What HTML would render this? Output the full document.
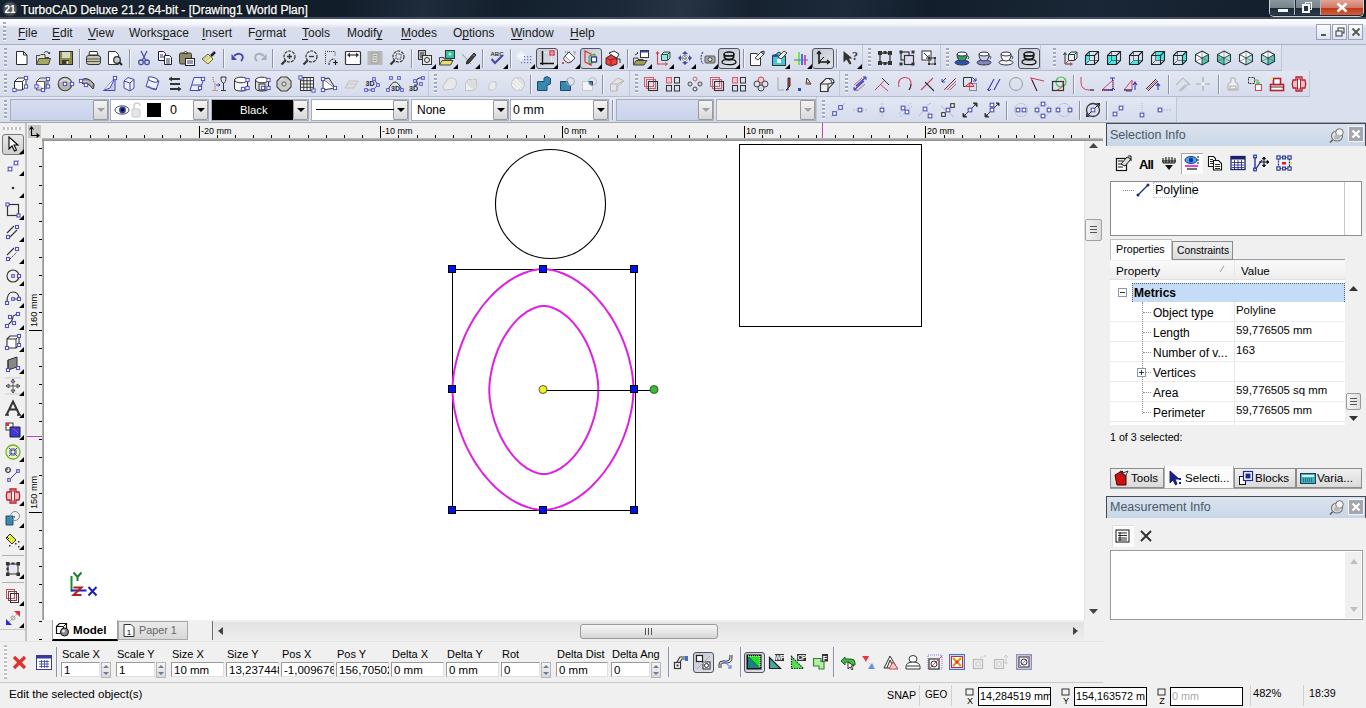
<!DOCTYPE html><html><head><meta charset="utf-8"><style>html,body{margin:0;padding:0;}body{width:1366px;height:708px;overflow:hidden;position:relative;background:#f0f0f0;font-family:"Liberation Sans", sans-serif;}div{box-sizing:border-box;}svg{overflow:visible;}</style></head><body>
<div style="position:absolute;left:0px;top:0px;width:1366px;height:19px;background:linear-gradient(100deg,#16222f 0%,#121d2a 25%,#1e2c3c 31%,#131f2c 37%,#1a2838 45%,#263444 50%,#162230 55%,#1c2a3a 62%,#121e2b 68%,#1a2736 80%,#101b28 100%);"></div>
<div style="position:absolute;left:0px;top:17px;width:1366px;height:2px;background:#3f4d5e;"></div>
<svg style="position:absolute;left:2px;top:1px;" width="16" height="16" viewBox="0 0 16 16"><circle cx="8" cy="8" r="7.5" fill="#3a3e44"/><circle cx="8" cy="8" r="6" fill="#555a60"/><text x="8" y="12" font-size="10" font-weight="bold" fill="#fff" text-anchor="middle" font-family="Liberation Sans">21</text></svg>
<div style="position:absolute;left:21px;top:3px;font-size:12px;line-height:14px;color:#fff;white-space:nowrap;text-shadow:0 0 2px #000;-webkit-text-stroke:0.25px #fff;">TurboCAD Deluxe 21.2 64-bit - [Drawing1 World Plan]</div>
<div style="position:absolute;left:1269px;top:0px;width:95px;height:17px;background:#1c2836;border:1px solid #c8d0d8;border-top:none;border-radius:0 0 5px 5px;"></div>
<div style="position:absolute;left:1270px;top:0px;width:25px;height:15px;background:linear-gradient(#8a979f 0%,#75838b 50%,#1e2a36 56%,#2c3c4a 100%);border-right:1px solid #b0b8c0;"></div>
<div style="position:absolute;left:1278px;top:9px;width:10px;height:3px;background:#f4f4f4;"></div>
<div style="position:absolute;left:1296px;top:0px;width:25px;height:15px;background:linear-gradient(#8a979f 0%,#75838b 50%,#1e2a36 56%,#2c3c4a 100%);border-right:1px solid #b0b8c0;"></div>
<svg style="position:absolute;left:1301px;top:1px;" width="12" height="13" viewBox="0 0 12 13"><rect x="4.5" y="1.5" width="6" height="7" fill="none" stroke="#f4f4f4" stroke-width="1"/><rect x="2" y="4" width="6" height="7" fill="#2a3440" stroke="#f4f4f4" stroke-width="2"/></svg>
<div style="position:absolute;left:1321px;top:0px;width:42px;height:15px;background:linear-gradient(#e4a494 0%,#d07a68 50%,#c03a18 56%,#d06040 100%);border-radius:0 0 4px 0;"></div>
<svg style="position:absolute;left:1336px;top:2px;" width="12" height="11" viewBox="0 0 12 11"><path d="M1.5 1.5L10.5 9.5M10.5 1.5L1.5 9.5" stroke="#fff" stroke-width="2.6"/></svg>
<div style="position:absolute;left:0px;top:19px;width:1366px;height:26px;background:linear-gradient(#fbfcfe 0px,#f4f6fb 5px,#d8deec 9px,#d6dcec 100%);"></div>
<div style="position:absolute;left:0px;top:44px;width:1366px;height:1px;background:#a9b0c2;"></div>
<div style="position:absolute;left:3px;top:22px;width:3px;height:20px;background:repeating-linear-gradient(#a4a8b8 0 2px,#fbfcfe 2px 3px,transparent 3px 4px);"></div>
<div style="position:absolute;left:18px;top:26px;font-size:12px;line-height:14px;color:#1a1a1a;white-space:nowrap;"><u style="text-decoration-thickness:1px;text-underline-offset:2px">F</u>ile</div>
<div style="position:absolute;left:52px;top:26px;font-size:12px;line-height:14px;color:#1a1a1a;white-space:nowrap;"><u style="text-decoration-thickness:1px;text-underline-offset:2px">E</u>dit</div>
<div style="position:absolute;left:88px;top:26px;font-size:12px;line-height:14px;color:#1a1a1a;white-space:nowrap;"><u style="text-decoration-thickness:1px;text-underline-offset:2px">V</u>iew</div>
<div style="position:absolute;left:129px;top:26px;font-size:12px;line-height:14px;color:#1a1a1a;white-space:nowrap;">Works<u style="text-decoration-thickness:1px;text-underline-offset:2px">p</u>ace</div>
<div style="position:absolute;left:202px;top:26px;font-size:12px;line-height:14px;color:#1a1a1a;white-space:nowrap;"><u style="text-decoration-thickness:1px;text-underline-offset:2px">I</u>nsert</div>
<div style="position:absolute;left:248px;top:26px;font-size:12px;line-height:14px;color:#1a1a1a;white-space:nowrap;">F<u style="text-decoration-thickness:1px;text-underline-offset:2px">o</u>rmat</div>
<div style="position:absolute;left:302px;top:26px;font-size:12px;line-height:14px;color:#1a1a1a;white-space:nowrap;"><u style="text-decoration-thickness:1px;text-underline-offset:2px">T</u>ools</div>
<div style="position:absolute;left:347px;top:26px;font-size:12px;line-height:14px;color:#1a1a1a;white-space:nowrap;">Modif<u style="text-decoration-thickness:1px;text-underline-offset:2px">y</u></div>
<div style="position:absolute;left:401px;top:26px;font-size:12px;line-height:14px;color:#1a1a1a;white-space:nowrap;"><u style="text-decoration-thickness:1px;text-underline-offset:2px">M</u>odes</div>
<div style="position:absolute;left:453px;top:26px;font-size:12px;line-height:14px;color:#1a1a1a;white-space:nowrap;">O<u style="text-decoration-thickness:1px;text-underline-offset:2px">p</u>tions</div>
<div style="position:absolute;left:511px;top:26px;font-size:12px;line-height:14px;color:#1a1a1a;white-space:nowrap;"><u style="text-decoration-thickness:1px;text-underline-offset:2px">W</u>indow</div>
<div style="position:absolute;left:570px;top:26px;font-size:12px;line-height:14px;color:#1a1a1a;white-space:nowrap;"><u style="text-decoration-thickness:1px;text-underline-offset:2px">H</u>elp</div>
<div style="position:absolute;left:1316px;top:24px;width:15px;height:16px;border:1px solid #9aa3b5;background:linear-gradient(#fafbfd,#dfe4ef);"></div>
<div style="position:absolute;left:1332px;top:24px;width:15px;height:16px;border:1px solid #9aa3b5;background:linear-gradient(#fafbfd,#dfe4ef);"></div>
<div style="position:absolute;left:1348px;top:24px;width:15px;height:16px;border:1px solid #9aa3b5;background:linear-gradient(#fafbfd,#dfe4ef);"></div>
<svg style="position:absolute;left:1319px;top:27px;" width="10" height="10" viewBox="0 0 10 10"><rect x="2" y="7" width="5" height="2" fill="#555"/></svg>
<svg style="position:absolute;left:1335px;top:27px;" width="10" height="10" viewBox="0 0 10 10"><rect x="3" y="1" width="6" height="5" fill="none" stroke="#555" stroke-width="1.2"/><rect x="1" y="4" width="6" height="5" fill="#eef" stroke="#555" stroke-width="1.2"/></svg>
<svg style="position:absolute;left:1351px;top:27px;" width="10" height="10" viewBox="0 0 10 10"><path d="M1.5 1.5L8.5 8.5M8.5 1.5L1.5 8.5" stroke="#555" stroke-width="1.8"/></svg>
<div style="position:absolute;left:0px;top:45px;width:1366px;height:78px;background:#dbe0ee;"></div>
<div style="position:absolute;left:0px;top:45px;width:863px;height:26px;background:linear-gradient(#e3e7f3,#d6dcec);border-bottom:1px solid #b4bccd;border-right:1px solid #c0c7d6;"></div>
<div style="position:absolute;left:863px;top:45px;width:78px;height:26px;background:linear-gradient(#e3e7f3,#d6dcec);border-bottom:1px solid #b4bccd;border-right:1px solid #c0c7d6;"></div>
<div style="position:absolute;left:941px;top:45px;width:100px;height:26px;background:linear-gradient(#e3e7f3,#d6dcec);border-bottom:1px solid #b4bccd;border-right:1px solid #c0c7d6;"></div>
<div style="position:absolute;left:1041px;top:45px;width:241px;height:26px;background:linear-gradient(#e3e7f3,#d6dcec);border-bottom:1px solid #b4bccd;border-right:1px solid #c0c7d6;"></div>
<div style="position:absolute;left:0px;top:71px;width:429px;height:26px;background:linear-gradient(#e3e7f3,#d6dcec);border-bottom:1px solid #b4bccd;border-right:1px solid #c0c7d6;"></div>
<div style="position:absolute;left:429px;top:71px;width:201px;height:26px;background:linear-gradient(#e3e7f3,#d6dcec);border-bottom:1px solid #b4bccd;border-right:1px solid #c0c7d6;"></div>
<div style="position:absolute;left:630px;top:71px;width:210px;height:26px;background:linear-gradient(#e3e7f3,#d6dcec);border-bottom:1px solid #b4bccd;border-right:1px solid #c0c7d6;"></div>
<div style="position:absolute;left:840px;top:71px;width:470px;height:26px;background:linear-gradient(#e3e7f3,#d6dcec);border-bottom:1px solid #b4bccd;border-right:1px solid #c0c7d6;"></div>
<div style="position:absolute;left:0px;top:97px;width:817px;height:26px;background:linear-gradient(#e3e7f3,#d6dcec);border-bottom:1px solid #b4bccd;border-right:1px solid #c0c7d6;"></div>
<div style="position:absolute;left:817px;top:97px;width:360px;height:26px;background:linear-gradient(#e3e7f3,#d6dcec);border-bottom:1px solid #b4bccd;border-right:1px solid #c0c7d6;"></div>
<div style="position:absolute;left:0px;top:122px;width:1366px;height:1px;background:#a3a7af;"></div>
<div style="position:absolute;left:4px;top:48px;width:3px;height:20px;background:repeating-linear-gradient(#a4a8b8 0 2px,#fbfcfe 2px 3px,transparent 3px 4px);"></div>
<div style="position:absolute;left:868px;top:48px;width:3px;height:20px;background:repeating-linear-gradient(#a4a8b8 0 2px,#fbfcfe 2px 3px,transparent 3px 4px);"></div>
<div style="position:absolute;left:946px;top:48px;width:3px;height:20px;background:repeating-linear-gradient(#a4a8b8 0 2px,#fbfcfe 2px 3px,transparent 3px 4px);"></div>
<div style="position:absolute;left:1053px;top:48px;width:3px;height:20px;background:repeating-linear-gradient(#a4a8b8 0 2px,#fbfcfe 2px 3px,transparent 3px 4px);"></div>
<div style="position:absolute;left:4px;top:74px;width:3px;height:20px;background:repeating-linear-gradient(#a4a8b8 0 2px,#fbfcfe 2px 3px,transparent 3px 4px);"></div>
<div style="position:absolute;left:434px;top:74px;width:3px;height:20px;background:repeating-linear-gradient(#a4a8b8 0 2px,#fbfcfe 2px 3px,transparent 3px 4px);"></div>
<div style="position:absolute;left:635px;top:74px;width:3px;height:20px;background:repeating-linear-gradient(#a4a8b8 0 2px,#fbfcfe 2px 3px,transparent 3px 4px);"></div>
<div style="position:absolute;left:845px;top:74px;width:3px;height:20px;background:repeating-linear-gradient(#a4a8b8 0 2px,#fbfcfe 2px 3px,transparent 3px 4px);"></div>
<div style="position:absolute;left:4px;top:100px;width:3px;height:20px;background:repeating-linear-gradient(#a4a8b8 0 2px,#fbfcfe 2px 3px,transparent 3px 4px);"></div>
<div style="position:absolute;left:822px;top:100px;width:3px;height:20px;background:repeating-linear-gradient(#a4a8b8 0 2px,#fbfcfe 2px 3px,transparent 3px 4px);"></div>
<div style="position:absolute;left:536px;top:48px;width:22px;height:21px;border:1px solid #4e5462;border-radius:3px;background:linear-gradient(135deg,#c4c8d2,#dfe2ea);"></div>
<div style="position:absolute;left:580px;top:48px;width:22px;height:21px;border:1px solid #4e5462;border-radius:3px;background:linear-gradient(135deg,#c4c8d2,#dfe2ea);"></div>
<div style="position:absolute;left:718px;top:48px;width:22px;height:21px;border:1px solid #4e5462;border-radius:3px;background:linear-gradient(135deg,#c4c8d2,#dfe2ea);"></div>
<div style="position:absolute;left:812px;top:48px;width:22px;height:21px;border:1px solid #4e5462;border-radius:3px;background:linear-gradient(135deg,#c4c8d2,#dfe2ea);"></div>
<div style="position:absolute;left:1018px;top:48px;width:22px;height:21px;border:1px solid #4e5462;border-radius:3px;background:linear-gradient(135deg,#c4c8d2,#dfe2ea);"></div>
<div style="position:absolute;left:79px;top:49px;width:1px;height:19px;background:#8c93a6;"></div>
<div style="position:absolute;left:80px;top:49px;width:1px;height:19px;background:#f4f6fb;"></div>
<div style="position:absolute;left:129px;top:49px;width:1px;height:19px;background:#8c93a6;"></div>
<div style="position:absolute;left:130px;top:49px;width:1px;height:19px;background:#f4f6fb;"></div>
<div style="position:absolute;left:223px;top:49px;width:1px;height:19px;background:#8c93a6;"></div>
<div style="position:absolute;left:224px;top:49px;width:1px;height:19px;background:#f4f6fb;"></div>
<div style="position:absolute;left:272px;top:49px;width:1px;height:19px;background:#8c93a6;"></div>
<div style="position:absolute;left:273px;top:49px;width:1px;height:19px;background:#f4f6fb;"></div>
<div style="position:absolute;left:411px;top:49px;width:1px;height:19px;background:#8c93a6;"></div>
<div style="position:absolute;left:412px;top:49px;width:1px;height:19px;background:#f4f6fb;"></div>
<div style="position:absolute;left:482px;top:49px;width:1px;height:19px;background:#8c93a6;"></div>
<div style="position:absolute;left:483px;top:49px;width:1px;height:19px;background:#f4f6fb;"></div>
<div style="position:absolute;left:510px;top:49px;width:1px;height:19px;background:#8c93a6;"></div>
<div style="position:absolute;left:511px;top:49px;width:1px;height:19px;background:#f4f6fb;"></div>
<div style="position:absolute;left:627px;top:49px;width:1px;height:19px;background:#8c93a6;"></div>
<div style="position:absolute;left:628px;top:49px;width:1px;height:19px;background:#f4f6fb;"></div>
<div style="position:absolute;left:743px;top:49px;width:1px;height:19px;background:#8c93a6;"></div>
<div style="position:absolute;left:744px;top:49px;width:1px;height:19px;background:#f4f6fb;"></div>
<div style="position:absolute;left:836px;top:49px;width:1px;height:19px;background:#8c93a6;"></div>
<div style="position:absolute;left:837px;top:49px;width:1px;height:19px;background:#f4f6fb;"></div>
<svg style="position:absolute;left:13px;top:50px;" width="16" height="16" viewBox="0 0 16 16"><g fill="none"><path d="M3.5 1.5H10.5L14 5V14.5H3.5Z" fill="#fff" stroke="#2a2a2a"/><path d="M10.5 1.5V5H14" fill="none" stroke="#2a2a2a"/></g></svg>
<svg style="position:absolute;left:35px;top:50px;" width="16" height="16" viewBox="0 0 16 16"><g fill="none"><path d="M1.5 5.5H5L6 4.5H10V7.5H14" fill="#e8e690" stroke="#444"/><path d="M1.5 5.5V14.5H13.5L15.5 8.5H4L1.5 14.5" fill="#a8a860" stroke="#444"/><path d="M1.5 5.5V14" stroke="#444"/><path d="M9 3C10 1 13 1 14 3.5M13 2.5L14.2 4L15 2" fill="none" stroke="#333" stroke-width="1"/></g></svg>
<svg style="position:absolute;left:58px;top:50px;" width="16" height="16" viewBox="0 0 16 16"><g fill="none"><rect x="1.5" y="1.5" width="13" height="13" fill="#8c8c48" stroke="#2e2e20"/><rect x="4" y="2" width="8" height="6" fill="#d8d8c0"/><rect x="4" y="10" width="7" height="4.5" fill="#3a3a30"/><rect x="8.5" y="11" width="2" height="3" fill="#e0e0d0"/></g></svg>
<svg style="position:absolute;left:85px;top:50px;" width="16" height="16" viewBox="0 0 16 16"><g fill="none"><path d="M4.5 1.5H12L13 5H4Z" fill="#fff" stroke="#333"/><path d="M1.5 7.5Q1.5 5.5 4 5.5H13Q15.5 5.5 15.5 8V12.5Q15.5 14.5 13 14.5H4Q1.5 14.5 1.5 12.5Z" fill="#c8c8b0" stroke="#333"/><path d="M2 9H15M2 11.5H15" stroke="#555" stroke-width="1"/></g></svg>
<svg style="position:absolute;left:107px;top:50px;" width="16" height="16" viewBox="0 0 16 16"><g fill="none"><path d="M1.5 1.5H8.5L11.5 4.5V14.5H1.5Z" fill="#fff" stroke="#333"/><circle cx="10" cy="10" r="3.3" fill="#bcd0c8" stroke="#333" stroke-width="1.3"/><path d="M12.3 12.3L15 15" stroke="#222" stroke-width="2"/></g></svg>
<svg style="position:absolute;left:136px;top:50px;" width="16" height="16" viewBox="0 0 16 16"><g fill="none"><path d="M5 1L9.5 10M11 1L6.5 10" stroke="#4848a8" stroke-width="1.2"/><circle cx="5" cy="12.3" r="2.3" fill="none" stroke="#4848a8" stroke-width="1.3"/><circle cx="11" cy="12.3" r="2.3" fill="none" stroke="#4848a8" stroke-width="1.3"/></g></svg>
<svg style="position:absolute;left:157px;top:50px;" width="16" height="16" viewBox="0 0 16 16"><g fill="none"><path d="M1.5 1.5H6.5L8.5 3.5V10.5H1.5Z" fill="#fff" stroke="#1e1e3c"/><path d="M7.5 5.5H12.5L14.5 7.5V14.5H7.5Z" fill="#fff" stroke="#1e1e3c"/><path d="M3 5H6M3 7H7M9 9H13M9 11H13M9 13H13" stroke="#1e1e3c" stroke-width="0.9"/></g></svg>
<svg style="position:absolute;left:179px;top:50px;" width="16" height="16" viewBox="0 0 16 16"><g fill="none"><rect x="0.5" y="3" width="12" height="11" rx="1.5" fill="#8c8a68" stroke="#3a3a2a"/><path d="M4 3.5L6.5 1L9 3.5Z" fill="#e0e0a0" stroke="#3a3a2a"/><rect x="6.5" y="8.5" width="9" height="7" fill="#fff" stroke="#1e1e3c"/><path d="M8 11H14M8 13H14" stroke="#1e1e3c" stroke-width="0.9"/></g></svg>
<svg style="position:absolute;left:201px;top:50px;" width="16" height="16" viewBox="0 0 16 16"><g fill="none"><path d="M1 9L7 4L12 9L7 14Z" fill="#e8e898" stroke="#6a6a40"/><path d="M3 9L7 6M5 11L9 7" stroke="#b0b060" stroke-width="0.8"/><path d="M10 6L14 2" stroke="#1e1e3c" stroke-width="2.5"/></g></svg>
<svg style="position:absolute;left:230px;top:50px;" width="16" height="16" viewBox="0 0 16 16"><g fill="none"><path d="M4 6Q8 2 12 5Q14 8 11 11" fill="none" stroke="#4848a8" stroke-width="1.8"/><path d="M1.5 4V10H7Z" fill="#4848a8"/></g></svg>
<svg style="position:absolute;left:252px;top:50px;" width="16" height="16" viewBox="0 0 16 16"><g fill="none"><path d="M12 6Q8 2 4 5Q2 8 5 11" fill="none" stroke="#a8acb8" stroke-width="1.8"/><path d="M14.5 4V10H9Z" fill="#a8acb8"/></g></svg>
<svg style="position:absolute;left:280px;top:50px;" width="16" height="16" viewBox="0 0 16 16"><g fill="none"><circle cx="9.5" cy="6.5" r="5.5" fill="none" stroke="#333" stroke-width="1.2" stroke-dasharray="3 1"/><path d="M7 6.5H12M9.5 4V9" stroke="#333" stroke-width="1.3"/><path d="M5.5 10.5L1.5 14.5" stroke="#333" stroke-width="2.2"/></g></svg>
<svg style="position:absolute;left:302px;top:50px;" width="16" height="16" viewBox="0 0 16 16"><g fill="none"><circle cx="9.5" cy="6.5" r="5.5" fill="none" stroke="#333" stroke-width="1.2" stroke-dasharray="3 1"/><path d="M7 6.5H12" stroke="#333" stroke-width="1.3"/><path d="M5.5 10.5L1.5 14.5" stroke="#333" stroke-width="2.2"/></g></svg>
<svg style="position:absolute;left:324px;top:50px;" width="16" height="16" viewBox="0 0 16 16"><g fill="none"><path d="M1.5 14V1.5H11V6" fill="none" stroke="#333" stroke-dasharray="1 1"/><path d="M5 15Q5 9 11 9" fill="none" stroke="#333" stroke-width="1.2" stroke-dasharray="2 1"/><path d="M9 12.5H14M11.5 10V15" stroke="#222" stroke-width="1.2"/></g></svg>
<svg style="position:absolute;left:345px;top:50px;" width="16" height="16" viewBox="0 0 16 16"><g fill="none"><rect x="0.5" y="1.5" width="15" height="13" rx="1" fill="#fff" stroke="#333" stroke-width="1.2"/><path d="M3 5H13" stroke="#333" stroke-width="1.2"/><path d="M2 5L5 2.5V7.5ZM14 5L11 2.5V7.5Z" fill="#333"/></g></svg>
<svg style="position:absolute;left:367px;top:50px;" width="16" height="16" viewBox="0 0 16 16"><g fill="none"><rect x="0.5" y="1" width="15" height="14" fill="#b8b8b8"/><rect x="5" y="3" width="6" height="10" fill="#d8d8d0" stroke="#a0a0a0"/><path d="M6.5 5.5H9.5M6.5 8H9.5M6.5 10.5H9.5" stroke="#999"/></g></svg>
<svg style="position:absolute;left:389px;top:50px;" width="16" height="16" viewBox="0 0 16 16"><g fill="none"><circle cx="9.5" cy="6.5" r="5.5" fill="#e4e6f4" stroke="#333" stroke-width="1.2" stroke-dasharray="3 1"/><rect x="7" y="4" width="5" height="5" fill="none" stroke="#333" stroke-dasharray="1.5 1"/><path d="M5.5 10.5L1.5 14.5" stroke="#333" stroke-width="2.2"/></g></svg>
<svg style="position:absolute;left:417px;top:50px;" width="16" height="16" viewBox="0 0 16 16"><g fill="none"><rect x="1.5" y="0.5" width="7" height="9" fill="#c0c0c0" stroke="#333"/><path d="M3 3H7M3 5H7M3 7H7" stroke="#333"/><rect x="5.5" y="5.5" width="9" height="9" fill="#e8e8e8" stroke="#333"/><circle cx="10" cy="10" r="2.5" fill="none" stroke="#333"/></g></svg>
<svg style="position:absolute;left:439px;top:50px;" width="16" height="16" viewBox="0 0 16 16"><g fill="none"><rect x="6.5" y="0.5" width="9" height="8" fill="#30c0b0" stroke="#333"/><circle cx="11" cy="4" r="1.5" fill="#e0f0a0"/><path d="M0.5 7.5H5V9H12V12" fill="#e8e480" stroke="#444"/><path d="M0.5 7.5V15H11.5L14 10.5H3L0.5 15" fill="#e8e070" stroke="#444"/></g></svg>
<svg style="position:absolute;left:461px;top:50px;" width="16" height="16" viewBox="0 0 16 16"><g fill="none"><path d="M1 4L10 14" stroke="#60a880" stroke-width="0.9"/><path d="M6 11L13 3L15 5L8 13L5.5 14Z" fill="#444" stroke="#222"/><path d="M12 4.5L13.5 6" stroke="#bbb"/></g></svg>
<svg style="position:absolute;left:489px;top:50px;" width="16" height="16" viewBox="0 0 16 16"><g fill="none"><text x="8" y="6" font-size="6" font-weight="bold" text-anchor="middle" fill="#333" font-family="Liberation Sans">ABC</text><path d="M2.5 9L6 13L14 5" fill="none" stroke="#4848a8" stroke-width="2"/></g></svg>
<svg style="position:absolute;left:516px;top:50px;" width="16" height="16" viewBox="0 0 16 16"><g fill="none"><path d="M5 1V11M0 6H10M1.5 2.5L8.5 9.5M8.5 2.5L1.5 9.5" stroke="#f4f8ff" stroke-width="1.3"/><g fill="#6a6ab0"><rect x="8" y="6" width="1.2" height="1.2"/><rect x="11" y="6" width="1.2" height="1.2"/><rect x="14" y="6" width="1.2" height="1.2"/><rect x="8" y="9" width="1.2" height="1.2"/><rect x="11" y="9" width="1.2" height="1.2"/><rect x="14" y="9" width="1.2" height="1.2"/><rect x="5" y="12" width="1.2" height="1.2"/><rect x="8" y="12" width="1.2" height="1.2"/><rect x="11" y="12" width="1.2" height="1.2"/><rect x="14" y="12" width="1.2" height="1.2"/></g></g></svg>
<svg style="position:absolute;left:539px;top:50px;" width="16" height="16" viewBox="0 0 16 16"><g fill="none"><path d="M3.5 1V15M1 13.5H15" stroke="#111" stroke-width="1.4"/><path d="M5 2.5H12M12.5 5V12" fill="none" stroke="#fff" stroke-dasharray="1 1.2"/><rect x="11" y="1" width="4" height="4" fill="#fff" stroke="#d02040" stroke-width="1.2"/><rect x="12.3" y="2.3" width="1.4" height="1.4" fill="#d02040"/></g></svg>
<svg style="position:absolute;left:561px;top:50px;" width="16" height="16" viewBox="0 0 16 16"><g fill="none"><path d="M4 6L8 2L14 8L10 12Z" fill="#fff" stroke="#444"/><path d="M4 6Q1 9 4 11L7 13L10 12" fill="#eee" stroke="#444"/><path d="M4 2H10" stroke="#555" stroke-dasharray="1 1"/><path d="M1 12L3 14M3 12L1 14" stroke="#d04060"/><text x="12" y="5" font-size="5" fill="#555" font-family="Liberation Sans">Y</text></g></svg>
<svg style="position:absolute;left:583px;top:50px;" width="16" height="16" viewBox="0 0 16 16"><g fill="none"><path d="M2 1L8 4V15L2 12Z" fill="none" stroke="#e02040" stroke-width="1.1"/><path d="M6 6L12 4V12L6 14Z" fill="#a0d0a0" stroke="#40a040"/><rect x="8.5" y="7" width="5" height="5" fill="#fff" stroke="#2a2a90" stroke-width="1.2"/></g></svg>
<svg style="position:absolute;left:605px;top:50px;" width="16" height="16" viewBox="0 0 16 16"><g fill="none"><path d="M1 8L6 5L12 8V14L6 16L1 14Z" fill="#e84040" stroke="#602020"/><path d="M1 8L6 10L12 8M6 10V16" stroke="#902020" fill="none"/><path d="M4 3L9 1L14 4L12 8L8 6Z" fill="#fff" stroke="#333"/><path d="M11 9L15 9V13" fill="none" stroke="#333"/></g></svg>
<svg style="position:absolute;left:633px;top:50px;" width="16" height="16" viewBox="0 0 16 16"><g fill="none"><rect x="7.5" y="0.5" width="8" height="7" fill="#fff" stroke="#333"/><rect x="7.5" y="0.5" width="8" height="2" fill="#3a40a0"/><path d="M0.5 8H5V9.5H10V11" fill="#d8d8a0" stroke="#444"/><path d="M0.5 8V15H11L14 10.5H3L0.5 15" fill="#a0a050" stroke="#444"/><path d="M2 5L5 3M5 3L4 2M5 3L3.5 4" stroke="#444"/></g></svg>
<svg style="position:absolute;left:655px;top:50px;" width="16" height="16" viewBox="0 0 16 16"><g fill="none"><path d="M6.5 4.5L9 2H15V8L12.5 10.5H6.5Z" fill="#8ee8e0" stroke="#444"/><path d="M6.5 4.5H12.5V10.5M12.5 4.5L15 2" fill="none" stroke="#444"/><path d="M2.5 2V14H12" fill="none" stroke="#d04050" stroke-width="1.1"/><path d="M1 4L2.5 1.5L4 4M10 12.5L12.5 14L10 15.5" fill="none" stroke="#d04050"/></g></svg>
<svg style="position:absolute;left:677px;top:50px;" width="16" height="16" viewBox="0 0 16 16"><g fill="none"><path d="M8 1L5 4H11ZM8 15L5 12H11ZM1 8L4 5V11ZM15 8L12 5V11Z" fill="#4848a8"/><path d="M8 4L12 8L8 12L4 8Z" fill="#f0f0e0" stroke="#a0a090"/><path d="M8 2V14M2 8H14" stroke="#4848a8" stroke-width="1" stroke-dasharray="2 1"/></g></svg>
<svg style="position:absolute;left:699px;top:50px;" width="16" height="16" viewBox="0 0 16 16"><g fill="none"><path d="M4 2Q0 8 4 14" fill="none" stroke="#4848a8" stroke-dasharray="2 1" stroke-width="1.2"/><rect x="6" y="6" width="10" height="7" rx="1" fill="#aaa" stroke="#555"/><circle cx="11" cy="9.5" r="2" fill="#eee" stroke="#444"/></g></svg>
<svg style="position:absolute;left:721px;top:50px;" width="16" height="16" viewBox="0 0 16 16"><g fill="none"><ellipse cx="8" cy="12" rx="7" ry="2.7" fill="none" stroke="#111" stroke-width="1.3"/><path d="M3 4Q3 10 8 10Q13 10 13 4" fill="none" stroke="#111" stroke-width="1.3"/><ellipse cx="8" cy="4" rx="5" ry="2" fill="none" stroke="#111" stroke-width="1.3"/><ellipse cx="8" cy="7.5" rx="5" ry="1.7" fill="none" stroke="#111" stroke-width="1"/></g></svg>
<svg style="position:absolute;left:749px;top:50px;" width="16" height="16" viewBox="0 0 16 16"><g fill="none"><path d="M1.5 3.5H8V15.5H1.5Z" fill="#fff" stroke="#333"/><path d="M8 3.5L11.5 7V15.5H1.5" fill="#fff" stroke="#333"/><path d="M6 8L12 2L15 4L9 10Z" fill="#eee" stroke="#444"/><path d="M12 2L15 4V1Z" fill="#fff" stroke="#333"/></g></svg>
<svg style="position:absolute;left:771px;top:50px;" width="16" height="16" viewBox="0 0 16 16"><g fill="none"><path d="M1.5 7L8 2L14.5 7V15.5H1.5Z" fill="#40c8d8" stroke="#333"/><rect x="1.5" y="6" width="13" height="9.5" fill="#40c8d8" stroke="#333"/><rect x="6" y="9" width="4" height="4" fill="#fff"/><path d="M7 7L13 1L16 3L10 9Z" fill="#eee" stroke="#444"/><rect x="1.5" y="4.5" width="5" height="2" fill="#2a3a9a"/></g></svg>
<svg style="position:absolute;left:793px;top:50px;" width="16" height="16" viewBox="0 0 16 16"><g fill="none"><rect x="2" y="5" width="2" height="10" fill="#f0f070"/><rect x="5" y="2" width="2" height="13" fill="#70e070"/><rect x="8" y="4" width="2" height="11" fill="#6060e0"/><rect x="11" y="5" width="2" height="10" fill="#e05080"/><path d="M1 10H15" stroke="#4080ff" stroke-width="1.2"/></g></svg>
<svg style="position:absolute;left:815px;top:50px;" width="16" height="16" viewBox="0 0 16 16"><g fill="none"><path d="M4 14V1.5M4 12L14 12" stroke="#111" stroke-width="1.5"/><path d="M2 4L4 1.5L6 4M12 10L14.5 12L12 14" fill="none" stroke="#111" stroke-width="1.3"/><path d="M4 12L9 7" stroke="#111" stroke-width="1"/></g></svg>
<svg style="position:absolute;left:843px;top:50px;" width="16" height="16" viewBox="0 0 16 16"><g fill="none"><path d="M0.5 1V12.5L3.5 9.5L6.5 14.5L8.5 13.5L6 8.5H9.5Z" fill="#333"/><text x="12" y="10" font-size="12" font-weight="bold" text-anchor="middle" fill="#3a3a4a" font-family="Liberation Serif">?</text></g></svg>
<svg style="position:absolute;left:877px;top:50px;" width="16" height="16" viewBox="0 0 16 16"><g fill="none"><rect x="3" y="3" width="10" height="10" fill="none" stroke="#333" stroke-width="1.2"/><g fill="#333"><rect x="1" y="1" width="4" height="4"/><rect x="11" y="1" width="4" height="4"/><rect x="1" y="11" width="4" height="4"/><rect x="11" y="11" width="4" height="4"/><rect x="6.5" y="1" width="3" height="3"/><rect x="6.5" y="12" width="3" height="3"/></g></g></svg>
<svg style="position:absolute;left:899px;top:50px;" width="16" height="16" viewBox="0 0 16 16"><g fill="none"><rect x="2" y="2" width="8" height="8" fill="none" stroke="#333" stroke-width="1.2"/><rect x="5.5" y="5.5" width="9" height="9" fill="#dde" stroke="#333" stroke-width="1.2"/><g fill="#333"><rect x="0.5" y="0.5" width="3" height="3"/><rect x="12.5" y="0.5" width="3" height="3"/><rect x="0.5" y="12.5" width="3" height="3"/><rect x="12.5" y="12.5" width="3" height="3"/></g></g></svg>
<svg style="position:absolute;left:921px;top:50px;" width="16" height="16" viewBox="0 0 16 16"><g fill="none"><rect x="1" y="1" width="9" height="9" fill="#fff" stroke="#333"/><path d="M3 3L8 8M8 5V8H5" fill="none" stroke="#333"/><rect x="8" y="8" width="6" height="6" fill="none" stroke="#333"/><g fill="#333"><rect x="7" y="7" width="2" height="2"/><rect x="13" y="7" width="2" height="2"/><rect x="7" y="13" width="2" height="2"/><rect x="13" y="13" width="2" height="2"/></g></g></svg>
<svg style="position:absolute;left:954px;top:50px;" width="16" height="16" viewBox="0 0 16 16"><g fill="none"><ellipse cx="8" cy="12.5" rx="7" ry="2.5" fill="#3050b0" stroke="#334"/><path d="M3 4Q3 11 8 11Q13 11 13 4Z" fill="#30a060" stroke="#334"/><ellipse cx="8" cy="4" rx="5" ry="2" fill="#fff" stroke="#334"/><path d="M13 6Q16 6 14 9" fill="none" stroke="#334"/></g></svg>
<svg style="position:absolute;left:976px;top:50px;" width="16" height="16" viewBox="0 0 16 16"><g fill="none"><ellipse cx="8" cy="12.5" rx="7" ry="2.5" fill="#8888c0" stroke="#334"/><path d="M3 4Q3 11 8 11Q13 11 13 4Z" fill="#c8d0f0" stroke="#334"/><ellipse cx="8" cy="4" rx="5" ry="2" fill="#fff" stroke="#334"/><path d="M13 6Q16 6 14 9" fill="none" stroke="#334"/></g></svg>
<svg style="position:absolute;left:998px;top:50px;" width="16" height="16" viewBox="0 0 16 16"><g fill="none"><ellipse cx="8" cy="12.5" rx="7" ry="2.5" fill="#f4f4f4" stroke="#334"/><path d="M3 4Q3 11 8 11Q13 11 13 4Z" fill="#fff" stroke="#334"/><ellipse cx="8" cy="4" rx="5" ry="2" fill="#fff" stroke="#334"/><path d="M13 6Q16 6 14 9" fill="none" stroke="#334"/></g></svg>
<svg style="position:absolute;left:1021px;top:50px;" width="16" height="16" viewBox="0 0 16 16"><g fill="none"><ellipse cx="8" cy="12" rx="7" ry="2.7" fill="none" stroke="#111" stroke-width="1.3"/><path d="M3 4Q3 10 8 10Q13 10 13 4" fill="none" stroke="#111" stroke-width="1.3"/><ellipse cx="8" cy="4" rx="5" ry="2" fill="none" stroke="#111" stroke-width="1.3"/><ellipse cx="8" cy="7.5" rx="5" ry="1.7" fill="none" stroke="#111" stroke-width="1"/></g></svg>
<svg style="position:absolute;left:1062px;top:50px;" width="16" height="16" viewBox="0 0 16 16"><g fill="none"><path d="M6.5 4.5L9 2H15V8L12.5 10.5H6.5Z" fill="#e8f4f4" stroke="#333"/><path d="M6.5 4.5H12.5V10.5M12.5 4.5L15 2" fill="none" stroke="#333"/><path d="M3 3V14H10" fill="none" stroke="#333" stroke-width="1"/><path d="M3 14L6 11" stroke="#d04050"/><path d="M1.5 5L3 2.5L4.5 5" fill="none" stroke="#333"/><path d="M8 12.5L10.5 14L8 15.5" fill="none" stroke="#d04050"/></g></svg>
<svg style="position:absolute;left:1084px;top:50px;" width="16" height="16" viewBox="0 0 16 16"><g fill="none"><path d="M1.5 5.5L5.5 1.5V10.5L1.5 14.5Z" fill="#48e8e0"/><path d="M5.5 1.5V10.5H14.5M5.5 10.5L1.5 14.5" fill="none" stroke="#3a4a4a" stroke-width="0.7"/><path d="M1.5 5.5L5.5 1.5H14.5V10.5L10.5 14.5H1.5ZM1.5 5.5H10.5V14.5M10.5 5.5L14.5 1.5" fill="none" stroke="#1e2a2a" stroke-width="1.1"/></g></svg>
<svg style="position:absolute;left:1106px;top:50px;" width="16" height="16" viewBox="0 0 16 16"><g fill="none"><rect x="1.5" y="5.5" width="9" height="9" fill="#48e8e0"/><path d="M5.5 1.5V10.5H14.5M5.5 10.5L1.5 14.5" fill="none" stroke="#3a4a4a" stroke-width="0.7"/><path d="M1.5 5.5L5.5 1.5H14.5V10.5L10.5 14.5H1.5ZM1.5 5.5H10.5V14.5M10.5 5.5L14.5 1.5" fill="none" stroke="#1e2a2a" stroke-width="1.1"/></g></svg>
<svg style="position:absolute;left:1128px;top:50px;" width="16" height="16" viewBox="0 0 16 16"><g fill="none"><path d="M1.5 14.5L5.5 10.5H14.5L10.5 14.5Z" fill="#48e8e0"/><path d="M5.5 1.5V10.5H14.5M5.5 10.5L1.5 14.5" fill="none" stroke="#3a4a4a" stroke-width="0.7"/><path d="M1.5 5.5L5.5 1.5H14.5V10.5L10.5 14.5H1.5ZM1.5 5.5H10.5V14.5M10.5 5.5L14.5 1.5" fill="none" stroke="#1e2a2a" stroke-width="1.1"/></g></svg>
<svg style="position:absolute;left:1150px;top:50px;" width="16" height="16" viewBox="0 0 16 16"><g fill="none"><path d="M5.5 1.5H14.5V10.5H5.5Z" fill="#48e8e0"/><path d="M5.5 1.5V10.5H14.5M5.5 10.5L1.5 14.5" fill="none" stroke="#3a4a4a" stroke-width="0.7"/><path d="M1.5 5.5L5.5 1.5H14.5V10.5L10.5 14.5H1.5ZM1.5 5.5H10.5V14.5M10.5 5.5L14.5 1.5" fill="none" stroke="#1e2a2a" stroke-width="1.1"/></g></svg>
<svg style="position:absolute;left:1172px;top:50px;" width="16" height="16" viewBox="0 0 16 16"><g fill="none"><path d="M10.5 5.5L14.5 1.5V10.5L10.5 14.5Z" fill="#48e8e0"/><path d="M5.5 1.5V10.5H14.5M5.5 10.5L1.5 14.5" fill="none" stroke="#3a4a4a" stroke-width="0.7"/><path d="M1.5 5.5L5.5 1.5H14.5V10.5L10.5 14.5H1.5ZM1.5 5.5H10.5V14.5M10.5 5.5L14.5 1.5" fill="none" stroke="#1e2a2a" stroke-width="1.1"/></g></svg>
<svg style="position:absolute;left:1194px;top:50px;" width="16" height="16" viewBox="0 0 16 16"><g fill="none"><path d="M8 1L14.5 4.5V11.5L8 15L1.5 11.5V4.5Z" fill="#fff"/><path d="M8 8L14.5 4.5V11.5L8 15Z" fill="#58c8b8"/><path d="M8 8V1M8 8L1.5 11.5M8 8L14.5 11.5" fill="none" stroke="#556" stroke-width="0.6"/><path d="M8 1L14.5 4.5V11.5L8 15L1.5 11.5V4.5Z" fill="none" stroke="#2a3a3a" stroke-width="1.1"/><path d="M1.5 4.5L8 8L14.5 4.5M8 8V15" fill="none" stroke="#2a3a3a" stroke-width="0.9"/></g></svg>
<svg style="position:absolute;left:1216px;top:50px;" width="16" height="16" viewBox="0 0 16 16"><g fill="none"><path d="M8 1L14.5 4.5V11.5L8 15L1.5 11.5V4.5Z" fill="#fff"/><path d="M8 8L1.5 4.5V11.5L8 15Z" fill="#58c8b8"/><path d="M8 8L14.5 4.5V11.5L8 15Z" fill="#a8e0d8"/><path d="M8 8V1M8 8L1.5 11.5M8 8L14.5 11.5" fill="none" stroke="#556" stroke-width="0.6"/><path d="M8 1L14.5 4.5V11.5L8 15L1.5 11.5V4.5Z" fill="none" stroke="#2a3a3a" stroke-width="1.1"/><path d="M1.5 4.5L8 8L14.5 4.5M8 8V15" fill="none" stroke="#2a3a3a" stroke-width="0.9"/></g></svg>
<svg style="position:absolute;left:1238px;top:50px;" width="16" height="16" viewBox="0 0 16 16"><g fill="none"><path d="M8 1L14.5 4.5V11.5L8 15L1.5 11.5V4.5Z" fill="#fff"/><path d="M8 8L14.5 4.5V11.5L8 15Z" fill="#a8e0d8"/><path d="M8 8V1M8 8L1.5 11.5M8 8L14.5 11.5" fill="none" stroke="#556" stroke-width="0.6"/><path d="M8 1L14.5 4.5V11.5L8 15L1.5 11.5V4.5Z" fill="none" stroke="#2a3a3a" stroke-width="1.1"/><path d="M1.5 4.5L8 8L14.5 4.5M8 8V15" fill="none" stroke="#2a3a3a" stroke-width="0.9"/></g></svg>
<svg style="position:absolute;left:1260px;top:50px;" width="16" height="16" viewBox="0 0 16 16"><g fill="none"><path d="M8 1L14.5 4.5V11.5L8 15L1.5 11.5V4.5Z" fill="#fff"/><path d="M8 8L1.5 4.5V11.5L8 15Z" fill="#a8e0d8"/><path d="M8 8L14.5 4.5V11.5L8 15Z" fill="#58c8b8"/><path d="M8 8V1M8 8L1.5 11.5M8 8L14.5 11.5" fill="none" stroke="#556" stroke-width="0.6"/><path d="M8 1L14.5 4.5V11.5L8 15L1.5 11.5V4.5Z" fill="none" stroke="#2a3a3a" stroke-width="1.1"/><path d="M1.5 4.5L8 8L14.5 4.5M8 8V15" fill="none" stroke="#2a3a3a" stroke-width="0.9"/></g></svg>
<svg style="position:absolute;left:431px;top:64px;" width="5" height="5" viewBox="0 0 5 5"><path d="M5 0V5H0Z" fill="#000"/></svg>
<svg style="position:absolute;left:453px;top:64px;" width="5" height="5" viewBox="0 0 5 5"><path d="M5 0V5H0Z" fill="#000"/></svg>
<svg style="position:absolute;left:475px;top:64px;" width="5" height="5" viewBox="0 0 5 5"><path d="M5 0V5H0Z" fill="#000"/></svg>
<svg style="position:absolute;left:503px;top:64px;" width="5" height="5" viewBox="0 0 5 5"><path d="M5 0V5H0Z" fill="#000"/></svg>
<svg style="position:absolute;left:530px;top:64px;" width="5" height="5" viewBox="0 0 5 5"><path d="M5 0V5H0Z" fill="#000"/></svg>
<svg style="position:absolute;left:553px;top:64px;" width="5" height="5" viewBox="0 0 5 5"><path d="M5 0V5H0Z" fill="#000"/></svg>
<svg style="position:absolute;left:575px;top:64px;" width="5" height="5" viewBox="0 0 5 5"><path d="M5 0V5H0Z" fill="#000"/></svg>
<svg style="position:absolute;left:597px;top:64px;" width="5" height="5" viewBox="0 0 5 5"><path d="M5 0V5H0Z" fill="#000"/></svg>
<svg style="position:absolute;left:619px;top:64px;" width="5" height="5" viewBox="0 0 5 5"><path d="M5 0V5H0Z" fill="#000"/></svg>
<svg style="position:absolute;left:647px;top:64px;" width="5" height="5" viewBox="0 0 5 5"><path d="M5 0V5H0Z" fill="#000"/></svg>
<svg style="position:absolute;left:669px;top:64px;" width="5" height="5" viewBox="0 0 5 5"><path d="M5 0V5H0Z" fill="#000"/></svg>
<svg style="position:absolute;left:691px;top:64px;" width="5" height="5" viewBox="0 0 5 5"><path d="M5 0V5H0Z" fill="#000"/></svg>
<svg style="position:absolute;left:713px;top:64px;" width="5" height="5" viewBox="0 0 5 5"><path d="M5 0V5H0Z" fill="#000"/></svg>
<svg style="position:absolute;left:735px;top:64px;" width="5" height="5" viewBox="0 0 5 5"><path d="M5 0V5H0Z" fill="#000"/></svg>
<svg style="position:absolute;left:785px;top:64px;" width="5" height="5" viewBox="0 0 5 5"><path d="M5 0V5H0Z" fill="#000"/></svg>
<svg style="position:absolute;left:807px;top:64px;" width="5" height="5" viewBox="0 0 5 5"><path d="M5 0V5H0Z" fill="#000"/></svg>
<svg style="position:absolute;left:857px;top:64px;" width="5" height="5" viewBox="0 0 5 5"><path d="M5 0V5H0Z" fill="#000"/></svg>
<div style="position:absolute;left:530px;top:75px;width:1px;height:19px;background:#8c93a6;"></div>
<div style="position:absolute;left:531px;top:75px;width:1px;height:19px;background:#f4f6fb;"></div>
<div style="position:absolute;left:602px;top:75px;width:1px;height:19px;background:#8c93a6;"></div>
<div style="position:absolute;left:603px;top:75px;width:1px;height:19px;background:#f4f6fb;"></div>
<div style="position:absolute;left:1073px;top:75px;width:1px;height:19px;background:#8c93a6;"></div>
<div style="position:absolute;left:1074px;top:75px;width:1px;height:19px;background:#f4f6fb;"></div>
<div style="position:absolute;left:1168px;top:75px;width:1px;height:19px;background:#8c93a6;"></div>
<div style="position:absolute;left:1169px;top:75px;width:1px;height:19px;background:#f4f6fb;"></div>
<div style="position:absolute;left:1218px;top:75px;width:1px;height:19px;background:#8c93a6;"></div>
<div style="position:absolute;left:1219px;top:75px;width:1px;height:19px;background:#f4f6fb;"></div>
<svg style="position:absolute;left:13px;top:76px;" width="16" height="16" viewBox="0 0 16 16"><g fill="none"><path d="M1.5 5.5L5 2H13V10.5L9.5 14H1.5Z" fill="#fff" stroke="#333"/><path d="M1.5 5.5H9.5V14M9.5 5.5L13 2" fill="none" stroke="#333"/><rect x="-0.10000000000000009" y="12.4" width="3.2" height="3.2" fill="#fff" stroke="#5050c0" stroke-width="1"/><rect x="11.4" y="0.3999999999999999" width="3.2" height="3.2" fill="#fff" stroke="#5050c0" stroke-width="1"/><rect x="11.4" y="8.9" width="3.2" height="3.2" fill="#fff" stroke="#5050c0" stroke-width="1"/></g></svg>
<svg style="position:absolute;left:35px;top:76px;" width="16" height="16" viewBox="0 0 16 16"><g fill="none"><path d="M1.5 5.5L5 2H13V10.5L9.5 14H1.5Z" fill="#ddd" stroke="#555"/><path d="M9.5 5.5L13 2V10.5L9.5 14Z" fill="#999"/><path d="M1.5 5.5H9.5V14" fill="#fff" stroke="#555"/><rect x="-0.10000000000000009" y="8.9" width="3.2" height="3.2" fill="#fff" stroke="#5050c0" stroke-width="1"/><rect x="11.4" y="1.4" width="3.2" height="3.2" fill="#fff" stroke="#5050c0" stroke-width="1"/><rect x="11.4" y="8.9" width="3.2" height="3.2" fill="#fff" stroke="#5050c0" stroke-width="1"/><rect x="6.4" y="12.4" width="3.2" height="3.2" fill="#fff" stroke="#5050c0" stroke-width="1"/></g></svg>
<svg style="position:absolute;left:57px;top:76px;" width="16" height="16" viewBox="0 0 16 16"><g fill="none"><circle cx="8" cy="8" r="6.8" fill="#b8b8b0" stroke="#444" stroke-width="1.1"/><path d="M3 6Q8 1 13 6" fill="none" stroke="#e8e8e0" stroke-width="1.5"/><rect x="6.4" y="6.4" width="3.2" height="3.2" fill="#fff" stroke="#5050c0" stroke-width="1"/><rect x="13.4" y="6.4" width="3.2" height="3.2" fill="#fff" stroke="#5050c0" stroke-width="1"/></g></svg>
<svg style="position:absolute;left:79px;top:76px;" width="16" height="16" viewBox="0 0 16 16"><g fill="none"><path d="M1 5Q8 -1 15 8Q15 12 14 13Q9 6 4 8Z" fill="#999" stroke="#333"/><path d="M3 6Q9 3 13 9" fill="none" stroke="#ddd"/><rect x="0.3999999999999999" y="3.4" width="3.2" height="3.2" fill="#fff" stroke="#5050c0" stroke-width="1"/><rect x="5.4" y="7.4" width="3.2" height="3.2" fill="#fff" stroke="#5050c0" stroke-width="1"/></g></svg>
<svg style="position:absolute;left:101px;top:76px;" width="16" height="16" viewBox="0 0 16 16"><g fill="none"><path d="M2.5 14.5L14 2V14.5Z" fill="#c8d0f0" stroke="#4848a8"/><path d="M2.5 14.5L9 12L14 2" fill="#eef" stroke="#4848a8"/><rect x="12.4" y="0.3999999999999999" width="3.2" height="3.2" fill="#fff" stroke="#5050c0" stroke-width="1"/></g></svg>
<svg style="position:absolute;left:122px;top:76px;" width="16" height="16" viewBox="0 0 16 16"><g fill="none"><path d="M2 5L6 1.5L12 3.5V12L8 15L2 12Z" fill="#eef" stroke="#4848a8"/><path d="M2 5L8 7V15M8 7L12 3.5" fill="none" stroke="#4848a8"/></g></svg>
<svg style="position:absolute;left:145px;top:76px;" width="16" height="16" viewBox="0 0 16 16"><g fill="none"><path d="M4 1.5L14 5L11 14L1 10.5Z" fill="#eef" stroke="#4848a8"/><ellipse cx="8" cy="3.5" rx="5" ry="2.2" transform="rotate(20 8 3.5)" fill="#fff" stroke="#4848a8"/><path d="M3 10Q6 14 11 13" fill="#8090d0" stroke="#4848a8"/></g></svg>
<svg style="position:absolute;left:167px;top:76px;" width="16" height="16" viewBox="0 0 16 16"><g fill="none"><path d="M3 3H13M3 8H13M3 13H13" stroke="#333" stroke-width="1.8"/><path d="M5 1L2 3L5 5M11 11L14 13L11 15" fill="none" stroke="#333"/></g></svg>
<svg style="position:absolute;left:189px;top:76px;" width="16" height="16" viewBox="0 0 16 16"><g fill="none"><path d="M5 1.5H15L11 14.5H1Z" fill="#eef" stroke="#4848a8"/><path d="M3 9H13" stroke="#4848a8"/><rect x="12.4" y="1.4" width="3.2" height="3.2" fill="#fff" stroke="#5050c0" stroke-width="1"/><rect x="9.4" y="10.4" width="3.2" height="3.2" fill="#fff" stroke="#5050c0" stroke-width="1"/></g></svg>
<svg style="position:absolute;left:211px;top:76px;" width="16" height="16" viewBox="0 0 16 16"><g fill="none"><path d="M2 1Q2 6 4 7V14M1.5 14.5H6.5" fill="none" stroke="#a04040" stroke-dasharray="1 1"/><path d="M10 1Q10 7 12.5 7Q15 7 15 1Z" fill="none" stroke="#333"/><path d="M12.5 7V14M10 14.5H15" stroke="#333"/><path d="M5 9H9M7.5 7.5L9 9L7.5 10.5" fill="none" stroke="#3a3aa0"/></g></svg>
<svg style="position:absolute;left:233px;top:76px;" width="16" height="16" viewBox="0 0 16 16"><g fill="none"><path d="M1.5 4V12Q1.5 15 8 15Q14.5 15 14.5 12V4" fill="#f4f4f4" stroke="#333"/><ellipse cx="8" cy="4" rx="6.5" ry="2.8" fill="#fff" stroke="#333"/><rect x="12.9" y="2.4" width="3.2" height="3.2" fill="#fff" stroke="#5050c0" stroke-width="1"/><rect x="12.9" y="10.4" width="3.2" height="3.2" fill="#fff" stroke="#5050c0" stroke-width="1"/><rect x="8.4" y="11.4" width="3.2" height="3.2" fill="#fff" stroke="#5050c0" stroke-width="1"/></g></svg>
<svg style="position:absolute;left:254px;top:76px;" width="16" height="16" viewBox="0 0 16 16"><g fill="none"><path d="M1.5 4V12Q1.5 15 8 15Q14.5 15 14.5 12V4" fill="#ddd" stroke="#333"/><ellipse cx="8" cy="4" rx="6.5" ry="2.8" fill="#fff" stroke="#333"/><rect x="5" y="8" width="6" height="6" fill="#eee" stroke="#333"/><rect x="12.9" y="2.4" width="3.2" height="3.2" fill="#fff" stroke="#5050c0" stroke-width="1"/><rect x="12.9" y="10.4" width="3.2" height="3.2" fill="#fff" stroke="#5050c0" stroke-width="1"/><rect x="7.4" y="10.4" width="3.2" height="3.2" fill="#fff" stroke="#5050c0" stroke-width="1"/></g></svg>
<svg style="position:absolute;left:276px;top:76px;" width="16" height="16" viewBox="0 0 16 16"><g fill="none"><path d="M5 1H11L15 5V11L11 15H5L1 11V5Z" fill="#ccc" stroke="#444" stroke-width="1.1"/><circle cx="8" cy="8" r="2" fill="#eee" stroke="#555"/><path d="M4 4L7 2" stroke="#eee"/></g></svg>
<svg style="position:absolute;left:299px;top:76px;" width="16" height="16" viewBox="0 0 16 16"><g fill="none"><rect x="1.5" y="1.5" width="13" height="13" fill="#fff" stroke="#333"/><path d="M4.75 1.5V14.5M8 1.5V14.5M11.25 1.5V14.5M1.5 4.75H14.5M1.5 8H14.5M1.5 11.25H14.5" stroke="#333"/><rect x="-0.10000000000000009" y="-0.10000000000000009" width="3.2" height="3.2" fill="#fff" stroke="#5050c0" stroke-width="1"/><rect x="12.9" y="12.9" width="3.2" height="3.2" fill="#fff" stroke="#5050c0" stroke-width="1"/></g></svg>
<svg style="position:absolute;left:321px;top:76px;" width="16" height="16" viewBox="0 0 16 16"><g fill="none"><path d="M2 3L14 12L2 14Z" fill="#fff" stroke="#333"/><path d="M2 3L8 2L14 12" fill="#ddd" stroke="#333"/><rect x="0.3999999999999999" y="1.4" width="3.2" height="3.2" fill="#fff" stroke="#5050c0" stroke-width="1"/><rect x="0.3999999999999999" y="12.4" width="3.2" height="3.2" fill="#fff" stroke="#5050c0" stroke-width="1"/><rect x="12.4" y="10.4" width="3.2" height="3.2" fill="#fff" stroke="#5050c0" stroke-width="1"/></g></svg>
<svg style="position:absolute;left:343px;top:76px;" width="16" height="16" viewBox="0 0 16 16"><g fill="none"><path d="M2 12L6 5H15L11 12Z" fill="#e0e0e0" stroke="#c0c0c0"/><path d="M3 10Q8 6 13 9" fill="none" stroke="#c8c8c8"/></g></svg>
<svg style="position:absolute;left:365px;top:76px;" width="16" height="16" viewBox="0 0 16 16"><g fill="none"><text x="0.5" y="10" font-size="7" font-weight="bold" fill="#1e1e3c" font-family="Liberation Sans">3D</text><path d="M1 14H8L13 9L9 3" fill="none" stroke="#4848a8"/><rect x="-0.30000000000000004" y="12.7" width="2.6" height="2.6" fill="#fff" stroke="#5050c0" stroke-width="1"/><rect x="6.7" y="12.7" width="2.6" height="2.6" fill="#fff" stroke="#5050c0" stroke-width="1"/><rect x="11.7" y="7.7" width="2.6" height="2.6" fill="#fff" stroke="#5050c0" stroke-width="1"/><rect x="7.7" y="1.7" width="2.6" height="2.6" fill="#fff" stroke="#5050c0" stroke-width="1"/></g></svg>
<svg style="position:absolute;left:387px;top:76px;" width="16" height="16" viewBox="0 0 16 16"><g fill="none"><path d="M1 14Q8 -2 15 14" fill="none" stroke="#333"/><text x="4" y="15" font-size="7" font-weight="bold" fill="#1e1e3c" font-family="Liberation Sans">3D</text><rect x="-0.30000000000000004" y="12.7" width="2.6" height="2.6" fill="#fff" stroke="#5050c0" stroke-width="1"/><rect x="13.7" y="12.7" width="2.6" height="2.6" fill="#fff" stroke="#5050c0" stroke-width="1"/><rect x="2.7" y="0.7" width="2.6" height="2.6" fill="#fff" stroke="#5050c0" stroke-width="1"/><rect x="10.7" y="0.7" width="2.6" height="2.6" fill="#fff" stroke="#5050c0" stroke-width="1"/></g></svg>
<svg style="position:absolute;left:409px;top:76px;" width="16" height="16" viewBox="0 0 16 16"><g fill="none"><path d="M14 2Q6 1 8 7Q10 10 5 9" fill="none" stroke="#1e1e3c"/><text x="0" y="15" font-size="7" font-weight="bold" fill="#1e1e3c" font-family="Liberation Sans">3D</text><rect x="12.7" y="0.7" width="2.6" height="2.6" fill="#fff" stroke="#5050c0" stroke-width="1"/><rect x="4.7" y="3.7" width="2.6" height="2.6" fill="#fff" stroke="#5050c0" stroke-width="1"/><rect x="10.7" y="6.7" width="2.6" height="2.6" fill="#fff" stroke="#5050c0" stroke-width="1"/></g></svg>
<svg style="position:absolute;left:442px;top:76px;" width="16" height="16" viewBox="0 0 16 16"><g fill="none"><path d="M1 10L5 4Q10 0 14 4Q16 9 12 13L2 14Z" fill="#e8e8e8" stroke="#c4c4c8"/></g></svg>
<svg style="position:absolute;left:464px;top:76px;" width="16" height="16" viewBox="0 0 16 16"><g fill="none"><rect x="1.5" y="6.5" width="8" height="8" fill="#eee" stroke="#c4c4c8"/><path d="M1.5 6.5L4.5 3.5H12.5V11.5L9.5 14.5" fill="#ddd" stroke="#c4c4c8"/><circle cx="11" cy="7" r="4.5" fill="none" stroke="#ddd"/></g></svg>
<svg style="position:absolute;left:486px;top:76px;" width="16" height="16" viewBox="0 0 16 16"><g fill="none"><path d="M3 8L6 6H10V12L7 14H3Z" fill="#eee" stroke="#c4c4c8"/><circle cx="10" cy="7" r="5" fill="none" stroke="#e4e4e4"/></g></svg>
<svg style="position:absolute;left:510px;top:76px;" width="16" height="16" viewBox="0 0 16 16"><g fill="none"><circle cx="8" cy="8" r="6.5" fill="#e0e0e0" stroke="#c4c4c8"/><path d="M3 5L11 13M5 3L13 11M2 8L8 14" stroke="#f8f8f8" stroke-width="1.2"/></g></svg>
<svg style="position:absolute;left:536px;top:76px;" width="16" height="16" viewBox="0 0 16 16"><g fill="none"><path d="M1.5 5.5H8V2L11 0.5L14.5 2.5V8L11 9.5V14.5H1.5Z" fill="#3a88b0" stroke="#1a4a70"/></g></svg>
<svg style="position:absolute;left:559px;top:76px;" width="16" height="16" viewBox="0 0 16 16"><g fill="none"><path d="M1.5 5.5H8.5Q8.5 9.5 11.5 9.5V14.5H1.5Z" fill="#3a88b0" stroke="#1a4a70"/><circle cx="11.5" cy="5.5" r="4" fill="none" stroke="#aaa"/></g></svg>
<svg style="position:absolute;left:581px;top:76px;" width="16" height="16" viewBox="0 0 16 16"><g fill="none"><rect x="1.5" y="5.5" width="10" height="9" fill="#f4f4f4" stroke="#c8c8c8"/><path d="M7.5 5.5H11.5V9.5Q8 9.5 7.5 5.5Z" fill="#3a88b0" stroke="#1a4a70"/><circle cx="11.5" cy="5.5" r="4" fill="none" stroke="#bbb"/></g></svg>
<svg style="position:absolute;left:609px;top:76px;" width="16" height="16" viewBox="0 0 16 16"><g fill="none"><path d="M1.5 8L9 2L15 5L8 11V15H1.5Z" fill="#e4e4e4" stroke="#b8b8b8"/><path d="M1.5 8H8V15M8 8L15 5" fill="none" stroke="#b8b8b8"/></g></svg>
<svg style="position:absolute;left:643px;top:76px;" width="16" height="16" viewBox="0 0 16 16"><g fill="none"><rect x="1.5" y="1.5" width="9" height="9" fill="none" stroke="#d06070"/><rect x="3.5" y="3.5" width="9" height="9" fill="none" stroke="#d06070"/><rect x="5.5" y="5.5" width="9" height="9" fill="none" stroke="#333" stroke-width="1.1"/></g></svg>
<svg style="position:absolute;left:665px;top:76px;" width="16" height="16" viewBox="0 0 16 16"><g fill="none"><rect x="1.5" y="1.5" width="5" height="5.5" fill="#f8c0c8" stroke="#d06070"/><rect x="9.5" y="1.5" width="5" height="5.5" fill="none" stroke="#333"/><rect x="1.5" y="9.5" width="5" height="5.5" fill="none" stroke="#333"/><rect x="9.5" y="9.5" width="5" height="5.5" fill="none" stroke="#333"/></g></svg>
<svg style="position:absolute;left:687px;top:76px;" width="16" height="16" viewBox="0 0 16 16"><g fill="none"><circle cx="8" cy="3" r="2" fill="none" stroke="#d06070"/><circle cx="3" cy="8" r="2" fill="none" stroke="#444"/><circle cx="13" cy="8" r="2" fill="none" stroke="#444"/><circle cx="8" cy="13" r="2" fill="none" stroke="#444"/></g></svg>
<svg style="position:absolute;left:709px;top:76px;" width="16" height="16" viewBox="0 0 16 16"><g fill="none"><rect x="1.5" y="1.5" width="9" height="9" fill="none" stroke="#d06070"/><rect x="3.5" y="3.5" width="9" height="9" fill="none" stroke="#d06070"/><rect x="5.5" y="5.5" width="9" height="9" fill="none" stroke="#333" stroke-width="1.1"/></g></svg>
<svg style="position:absolute;left:731px;top:76px;" width="16" height="16" viewBox="0 0 16 16"><g fill="none"><rect x="1.5" y="1.5" width="5" height="5.5" fill="#f8c0c8" stroke="#d06070"/><rect x="9.5" y="1.5" width="5" height="5.5" fill="none" stroke="#333"/><rect x="1.5" y="9.5" width="5" height="5.5" fill="none" stroke="#333"/><rect x="9.5" y="9.5" width="5" height="5.5" fill="none" stroke="#333"/></g></svg>
<svg style="position:absolute;left:753px;top:76px;" width="16" height="16" viewBox="0 0 16 16"><g fill="none"><circle cx="8" cy="4" r="3" fill="#f8c8d0" stroke="#c05060"/><circle cx="4" cy="8" r="3" fill="none" stroke="#444"/><circle cx="12" cy="8" r="3" fill="none" stroke="#444"/><circle cx="8" cy="12" r="3" fill="none" stroke="#444"/></g></svg>
<svg style="position:absolute;left:776px;top:76px;" width="16" height="16" viewBox="0 0 16 16"><g fill="none"><path d="M2 1V14H8" fill="none" stroke="#bbb" stroke-width="1.5"/><path d="M10 14L14 10V2H12V14Z" fill="#e03030" stroke="#333"/></g></svg>
<svg style="position:absolute;left:797px;top:76px;" width="16" height="16" viewBox="0 0 16 16"><g fill="none"><path d="M10 2L14 8H9Z" fill="#fff" stroke="#333"/><path d="M2 14L9 8" stroke="#dde" stroke-width="1.3"/><rect x="1" y="12" width="3" height="3" fill="#2a4ad0"/><path d="M10 6L14 8" stroke="#e03030"/></g></svg>
<svg style="position:absolute;left:819px;top:76px;" width="16" height="16" viewBox="0 0 16 16"><g fill="none"><path d="M1.5 8L7 2.5H11Q15 2.5 15 6.5L9 13V15.5H1.5Z" fill="#eee" stroke="#333" stroke-width="1.1"/><path d="M1.5 8H9V15.5M9 8L15 6.5" fill="none" stroke="#333"/><path d="M10 3Q13 4 13 7" fill="#fff" stroke="#333"/></g></svg>
<svg style="position:absolute;left:852px;top:76px;" width="16" height="16" viewBox="0 0 16 16"><g fill="none"><path d="M4 10L14 1M2 14L12 5" stroke="#3a3ab0" stroke-width="1.2"/><path d="M2 9L10 2M5 15L13 8" stroke="#d04060" stroke-width="0.8"/><path d="M11 1H14V4M2 11V14H5" fill="none" stroke="#3a3ab0"/></g></svg>
<svg style="position:absolute;left:874px;top:76px;" width="16" height="16" viewBox="0 0 16 16"><g fill="none"><path d="M1 14L10 5M6 8L14 15" stroke="#d04060" stroke-width="1"/><path d="M8 2L15 9" stroke="#333" stroke-width="1"/></g></svg>
<svg style="position:absolute;left:897px;top:76px;" width="16" height="16" viewBox="0 0 16 16"><g fill="none"><path d="M2 11Q0 3 7 1.5Q14 1 14 8Q14 12 12 14" fill="none" stroke="#d04060" stroke-width="1.1"/><path d="M12 14Q14 11 14 8" fill="none" stroke="#333"/></g></svg>
<svg style="position:absolute;left:919px;top:76px;" width="16" height="16" viewBox="0 0 16 16"><g fill="none"><path d="M2 14L14 2" stroke="#d04060" stroke-width="1.1"/><path d="M6 6L15 15" stroke="#333" stroke-width="1.1"/></g></svg>
<svg style="position:absolute;left:941px;top:76px;" width="16" height="16" viewBox="0 0 16 16"><g fill="none"><path d="M6 14L15 5M9 14L15 8M3 14L15 2" stroke="#d04060" stroke-width="1"/><path d="M1 6L5 2M1 6H4M1 6V3" fill="none" stroke="#3a3ab0"/><path d="M4 13L14 3" stroke="#333" stroke-width="0.8"/></g></svg>
<svg style="position:absolute;left:962px;top:76px;" width="16" height="16" viewBox="0 0 16 16"><g fill="none"><path d="M1.5 1.5H9.5V10.5H1.5Z" fill="none" stroke="#333"/><path d="M3 10.5L12 10.5L9 6Z" fill="#f0b0b8" stroke="#e03040"/><rect x="7.5" y="7.5" width="7" height="7" fill="none" stroke="#333" stroke-dasharray="1 1"/><path d="M10 1L14 5M14 2V5H11" fill="none" stroke="#3a3ab0"/></g></svg>
<svg style="position:absolute;left:986px;top:76px;" width="16" height="16" viewBox="0 0 16 16"><g fill="none"><path d="M2 14L8 3M8 14L14 3" stroke="#3a3ab0" stroke-width="1.1"/><path d="M1 13L3 15L5 13" fill="none" stroke="#3a3ab0"/></g></svg>
<svg style="position:absolute;left:1008px;top:76px;" width="16" height="16" viewBox="0 0 16 16"><g fill="none"><circle cx="8" cy="8" r="6.5" fill="none" stroke="#999" stroke-width="1"/></g></svg>
<svg style="position:absolute;left:1029px;top:76px;" width="16" height="16" viewBox="0 0 16 16"><g fill="none"><path d="M8 15L2 2L15 5" fill="none" stroke="#d04060" stroke-width="1.1"/><path d="M8 15L3 4" stroke="#333"/></g></svg>
<svg style="position:absolute;left:1051px;top:76px;" width="16" height="16" viewBox="0 0 16 16"><g fill="none"><circle cx="10" cy="6" r="5" fill="none" stroke="#40c040" stroke-width="1.2"/><rect x="1.5" y="5.5" width="11" height="9" fill="none" stroke="#333" stroke-width="1.2"/><path d="M6 14Q12 12 12 6" fill="none" stroke="#d04060"/></g></svg>
<svg style="position:absolute;left:1079px;top:76px;" width="16" height="16" viewBox="0 0 16 16"><g fill="none"><path d="M2 1V6Q2 14 10 14H15" fill="none" stroke="#d04060" stroke-width="1"/><path d="M11 14H15" stroke="#333"/></g></svg>
<svg style="position:absolute;left:1101px;top:76px;" width="16" height="16" viewBox="0 0 16 16"><g fill="none"><path d="M1 14L12 4V14Z" fill="none" stroke="#d04060"/><path d="M1 14H12" stroke="#333"/><path d="M3 14H12M12 4V14" stroke="#3a3ab0" stroke-dasharray="1 1"/><path d="M9 2H14M11.5 2V5M10 14L12 12L14 14" stroke="#3a3ab0" fill="none"/></g></svg>
<svg style="position:absolute;left:1123px;top:76px;" width="16" height="16" viewBox="0 0 16 16"><g fill="none"><path d="M1 14L9 4V14Z" fill="none" stroke="#d04060"/><path d="M1 14H9" stroke="#333"/><path d="M3 15H9" stroke="#3a3ab0"/><path d="M12 14V7M10 9L12 6L14 9" fill="none" stroke="#3a3ab0" stroke-width="1.1"/></g></svg>
<svg style="position:absolute;left:1145px;top:76px;" width="16" height="16" viewBox="0 0 16 16"><g fill="none"><path d="M1 13L11 3M3 15L13 5" stroke="#333"/><path d="M2 14L12 4" stroke="#d04060"/><path d="M13 14V8M11 10L13 7.5L15 10" fill="none" stroke="#3a3ab0" stroke-width="1.1"/></g></svg>
<svg style="position:absolute;left:1175px;top:76px;" width="16" height="16" viewBox="0 0 16 16"><g fill="none"><path d="M1 9L8 2L15 9M4 15L10 9M6 15L14 7" fill="none" stroke="#bbb" stroke-width="1.1"/></g></svg>
<svg style="position:absolute;left:1195px;top:76px;" width="16" height="16" viewBox="0 0 16 16"><g fill="none"><path d="M8 1V6M8 10V15M1 8H6M10 8H15" stroke="#aaa" stroke-width="1.2"/><circle cx="8" cy="8" r="1.5" fill="#eee"/></g></svg>
<svg style="position:absolute;left:1225px;top:76px;" width="16" height="16" viewBox="0 0 16 16"><g fill="none"><path d="M6 2H10V6L13 8V14H3V8L6 6Z" fill="#f0f0f0" stroke="#aaa"/><rect x="5" y="10" width="6" height="3" fill="none" stroke="#aaa"/></g></svg>
<svg style="position:absolute;left:1247px;top:76px;" width="16" height="16" viewBox="0 0 16 16"><g fill="none"><rect x="1.5" y="1.5" width="6" height="6" fill="none" stroke="#333" stroke-dasharray="2 1"/><rect x="8.5" y="8.5" width="6" height="6" fill="#fff" stroke="#e04050"/><path d="M7 4H11V8M9 6L11 8.5L13 6" fill="none" stroke="#40b040"/></g></svg>
<svg style="position:absolute;left:1269px;top:76px;" width="16" height="16" viewBox="0 0 16 16"><g fill="none"><rect x="1.5" y="8.5" width="13" height="6" fill="#fff" stroke="#b82030" stroke-width="1.6"/><rect x="4.5" y="2.5" width="7" height="6" fill="#fff" stroke="#b82030" stroke-width="1.6"/><path d="M1.5 11H14.5" stroke="#333"/><rect x="2" y="2" width="2" height="2" fill="#f0f040"/></g></svg>
<svg style="position:absolute;left:1291px;top:76px;" width="16" height="16" viewBox="0 0 16 16"><g fill="none"><path d="M5 1H11V4H14Q15.5 8 14 12H11V15H5V12H2Q0.5 8 2 4H5Z" fill="#f0c0c0" stroke="#b82030" stroke-width="1.3"/><rect x="6.5" y="3" width="3" height="10" fill="#fff" stroke="#b82030"/></g></svg>
<div style="position:absolute;left:10px;top:99px;width:99px;height:22px;border:1px solid #a6acb8;background:linear-gradient(#d5ddf0,#c9d3ea);"></div>
<div style="position:absolute;left:93px;top:100px;width:15px;height:20px;background:linear-gradient(#f4f4f4,#d8d8d8);border:1px solid #9a9a9a;border-radius:1px;"></div>
<svg style="position:absolute;left:97px;top:108px;" width="8" height="5" viewBox="0 0 8 5"><path d="M0 0H8L4 4Z" fill="#a0a0a0"/></svg>
<div style="position:absolute;left:110px;top:99px;width:99px;height:22px;border:1px solid #a6acb8;background:#fff;"></div>
<div style="position:absolute;left:193px;top:100px;width:15px;height:20px;background:linear-gradient(#f4f4f4,#d8d8d8);border:1px solid #9a9a9a;border-radius:1px;"></div>
<svg style="position:absolute;left:197px;top:108px;" width="8" height="5" viewBox="0 0 8 5"><path d="M0 0H8L4 4Z" fill="#000"/></svg>
<svg style="position:absolute;left:114px;top:103px;" width="16" height="14" viewBox="0 0 16 14"><ellipse cx="8" cy="7" rx="7" ry="4.2" fill="#f6f8ff" stroke="#223" stroke-width="0.8"/><circle cx="8.5" cy="7" r="3.4" fill="#2a3f9a"/><circle cx="8.5" cy="7" r="1.4" fill="#000"/></svg>
<svg style="position:absolute;left:131px;top:102px;" width="12" height="16" viewBox="0 0 12 16"><rect x="1" y="7" width="8" height="8" rx="1" fill="#e6e6e6" stroke="#c8c8c8"/><path d="M3 7V4a3 3 0 0 1 6 0" fill="none" stroke="#cfcfcf" stroke-width="1.5"/></svg>
<div style="position:absolute;left:147px;top:103px;width:14px;height:14px;background:#000;"></div>
<div style="position:absolute;left:170px;top:103px;font-size:12.5px;line-height:14.5px;color:#000;white-space:nowrap;">0</div>
<div style="position:absolute;left:211px;top:99px;width:98px;height:22px;border:1px solid #a6acb8;background:#fff;"></div>
<div style="position:absolute;left:293px;top:100px;width:15px;height:20px;background:linear-gradient(#f4f4f4,#d8d8d8);border:1px solid #9a9a9a;border-radius:1px;"></div>
<svg style="position:absolute;left:297px;top:108px;" width="8" height="5" viewBox="0 0 8 5"><path d="M0 0H8L4 4Z" fill="#000"/></svg>
<div style="position:absolute;left:212px;top:100px;width:81px;height:20px;background:#000;"></div>
<div style="position:absolute;left:240px;top:104px;font-size:11.3px;line-height:13.3px;color:#fff;white-space:nowrap;">Black</div>
<div style="position:absolute;left:311px;top:99px;width:98px;height:22px;border:1px solid #a6acb8;background:#fff;"></div>
<div style="position:absolute;left:393px;top:100px;width:15px;height:20px;background:linear-gradient(#f4f4f4,#d8d8d8);border:1px solid #9a9a9a;border-radius:1px;"></div>
<svg style="position:absolute;left:397px;top:108px;" width="8" height="5" viewBox="0 0 8 5"><path d="M0 0H8L4 4Z" fill="#000"/></svg>
<div style="position:absolute;left:316px;top:109px;width:78px;height:1px;background:#000;"></div>
<div style="position:absolute;left:411px;top:99px;width:98px;height:22px;border:1px solid #a6acb8;background:#fff;"></div>
<div style="position:absolute;left:493px;top:100px;width:15px;height:20px;background:linear-gradient(#f4f4f4,#d8d8d8);border:1px solid #9a9a9a;border-radius:1px;"></div>
<svg style="position:absolute;left:497px;top:108px;" width="8" height="5" viewBox="0 0 8 5"><path d="M0 0H8L4 4Z" fill="#000"/></svg>
<div style="position:absolute;left:417px;top:103px;font-size:12px;line-height:14px;color:#000;white-space:nowrap;">None</div>
<div style="position:absolute;left:510px;top:99px;width:99px;height:22px;border:1px solid #a6acb8;background:#fff;"></div>
<div style="position:absolute;left:593px;top:100px;width:15px;height:20px;background:linear-gradient(#f4f4f4,#d8d8d8);border:1px solid #9a9a9a;border-radius:1px;"></div>
<svg style="position:absolute;left:597px;top:108px;" width="8" height="5" viewBox="0 0 8 5"><path d="M0 0H8L4 4Z" fill="#000"/></svg>
<div style="position:absolute;left:513px;top:103px;font-size:12.4px;line-height:14.4px;color:#000;white-space:nowrap;">0 mm</div>
<div style="position:absolute;left:612px;top:100px;width:1px;height:20px;background:#8c93a6;"></div>
<div style="position:absolute;left:613px;top:100px;width:1px;height:20px;background:#f4f6fb;"></div>
<div style="position:absolute;left:616px;top:99px;width:98px;height:22px;border:1px solid #a6acb8;background:linear-gradient(#d5ddf0,#c9d3ea);"></div>
<div style="position:absolute;left:698px;top:100px;width:15px;height:20px;background:linear-gradient(#f4f4f4,#d8d8d8);border:1px solid #9a9a9a;border-radius:1px;"></div>
<svg style="position:absolute;left:702px;top:108px;" width="8" height="5" viewBox="0 0 8 5"><path d="M0 0H8L4 4Z" fill="#a0a0a0"/></svg>
<div style="position:absolute;left:716px;top:99px;width:100px;height:22px;border:1px solid #a6acb8;background:#ededec;"></div>
<div style="position:absolute;left:800px;top:100px;width:15px;height:20px;background:linear-gradient(#f4f4f4,#d8d8d8);border:1px solid #9a9a9a;border-radius:1px;"></div>
<svg style="position:absolute;left:804px;top:108px;" width="8" height="5" viewBox="0 0 8 5"><path d="M0 0H8L4 4Z" fill="#a0a0a0"/></svg>
<div style="position:absolute;left:1006px;top:101px;width:1px;height:19px;background:#8c93a6;"></div>
<div style="position:absolute;left:1007px;top:101px;width:1px;height:19px;background:#f4f6fb;"></div>
<div style="position:absolute;left:1079px;top:101px;width:1px;height:19px;background:#8c93a6;"></div>
<div style="position:absolute;left:1080px;top:101px;width:1px;height:19px;background:#f4f6fb;"></div>
<div style="position:absolute;left:1106px;top:101px;width:1px;height:19px;background:#8c93a6;"></div>
<div style="position:absolute;left:1107px;top:101px;width:1px;height:19px;background:#f4f6fb;"></div>
<svg style="position:absolute;left:830px;top:102px;" width="16" height="16" viewBox="0 0 16 16"><g fill="none"><path d="M1 15L15 1" stroke="#a8aec0" stroke-width="0.8"/><rect x="2.7" y="9.7" width="3.6" height="3.6" fill="#fff" stroke="#5050c0" stroke-width="1.1"/><rect x="8.7" y="3.7" width="3.6" height="3.6" fill="#fff" stroke="#5050c0" stroke-width="1.1"/></g></svg>
<svg style="position:absolute;left:852px;top:102px;" width="16" height="16" viewBox="0 0 16 16"><g fill="none"><path d="M1 8H15" stroke="#a8aec0" stroke-width="0.8" stroke-dasharray="2 1"/><rect x="6.2" y="6.2" width="3.6" height="3.6" fill="#fff" stroke="#5050c0" stroke-width="1.1"/></g></svg>
<svg style="position:absolute;left:874px;top:102px;" width="16" height="16" viewBox="0 0 16 16"><g fill="none"><path d="M8 1V15" stroke="#a8aec0" stroke-width="0.8" stroke-dasharray="2 1"/><rect x="6.2" y="6.2" width="3.6" height="3.6" fill="#fff" stroke="#5050c0" stroke-width="1.1"/></g></svg>
<svg style="position:absolute;left:897px;top:102px;" width="16" height="16" viewBox="0 0 16 16"><g fill="none"><path d="M2 12L14 1M3 15L15 4" stroke="#a8aec0" stroke-width="0.8" stroke-dasharray="2 1"/><rect x="4.2" y="4.2" width="3.6" height="3.6" fill="#fff" stroke="#5050c0" stroke-width="1.1"/><rect x="8.2" y="8.2" width="3.6" height="3.6" fill="#fff" stroke="#5050c0" stroke-width="1.1"/></g></svg>
<svg style="position:absolute;left:918px;top:102px;" width="16" height="16" viewBox="0 0 16 16"><g fill="none"><path d="M1 14L7 7L12 12M9 3L13 1" stroke="#a8aec0" stroke-width="0.8"/><rect x="5.2" y="5.2" width="3.6" height="3.6" fill="#fff" stroke="#5050c0" stroke-width="1.1"/><rect x="10.2" y="12.2" width="3.6" height="3.6" fill="#fff" stroke="#5050c0" stroke-width="1.1"/></g></svg>
<svg style="position:absolute;left:940px;top:102px;" width="16" height="16" viewBox="0 0 16 16"><g fill="none"><path d="M1 4L14 15M2 14L14 2" stroke="#a8aec0" stroke-width="0.8"/><rect x="6.2" y="6.2" width="3.6" height="3.6" fill="#fff" stroke="#5050c0" stroke-width="1.1"/><rect x="10.7" y="1.7" width="3.6" height="3.6" fill="#fff" stroke="#333" stroke-width="1.1"/><rect x="1.7" y="10.7" width="3.6" height="3.6" fill="#fff" stroke="#333" stroke-width="1.1"/></g></svg>
<svg style="position:absolute;left:962px;top:102px;" width="16" height="16" viewBox="0 0 16 16"><g fill="none"><path d="M1 15L15 1" stroke="#333" stroke-width="1"/><path d="M11 1H15V5M1 11V15H5" fill="#333" stroke="#333"/><rect x="6.2" y="6.2" width="3.6" height="3.6" fill="#fff" stroke="#5050c0" stroke-width="1.1"/></g></svg>
<svg style="position:absolute;left:984px;top:102px;" width="16" height="16" viewBox="0 0 16 16"><g fill="none"><path d="M1 15L15 1" stroke="#333"/><path d="M1 11V15H5M12 1H15V4" fill="#333" stroke="#333"/><path d="M8 3V8" stroke="#333"/><rect x="6.2" y="1.2" width="3.6" height="3.6" fill="#fff" stroke="#5050c0" stroke-width="1.1"/><rect x="6.2" y="6.2" width="3.6" height="3.6" fill="#fff" stroke="#5050c0" stroke-width="1.1"/></g></svg>
<svg style="position:absolute;left:1013px;top:102px;" width="16" height="16" viewBox="0 0 16 16"><g fill="none"><circle cx="8" cy="8" r="6.5" fill="none" stroke="#a8aec0" stroke-dasharray="1.5 1"/><rect x="3.2" y="6.2" width="3.6" height="3.6" fill="#fff" stroke="#5050c0" stroke-width="1.1"/><rect x="9.2" y="6.2" width="3.6" height="3.6" fill="#fff" stroke="#5050c0" stroke-width="1.1"/></g></svg>
<svg style="position:absolute;left:1035px;top:102px;" width="16" height="16" viewBox="0 0 16 16"><g fill="none"><circle cx="8" cy="8" r="6.5" fill="none" stroke="#a8aec0" stroke-dasharray="1.5 1"/><rect x="6.2" y="0.19999999999999996" width="3.6" height="3.6" fill="#fff" stroke="#5050c0" stroke-width="1.1"/><rect x="0.19999999999999996" y="6.2" width="3.6" height="3.6" fill="#fff" stroke="#5050c0" stroke-width="1.1"/><rect x="12.2" y="6.2" width="3.6" height="3.6" fill="#fff" stroke="#5050c0" stroke-width="1.1"/><rect x="6.2" y="12.2" width="3.6" height="3.6" fill="#fff" stroke="#5050c0" stroke-width="1.1"/></g></svg>
<svg style="position:absolute;left:1056px;top:102px;" width="16" height="16" viewBox="0 0 16 16"><g fill="none"><circle cx="8" cy="8" r="6.5" fill="none" stroke="#a8aec0" stroke-dasharray="1.5 1"/><rect x="0.19999999999999996" y="6.2" width="3.6" height="3.6" fill="#fff" stroke="#5050c0" stroke-width="1.1"/><rect x="12.2" y="6.2" width="3.6" height="3.6" fill="#fff" stroke="#5050c0" stroke-width="1.1"/></g></svg>
<svg style="position:absolute;left:1085px;top:102px;" width="16" height="16" viewBox="0 0 16 16"><g fill="none"><circle cx="8" cy="8" r="6.5" fill="none" stroke="#333" stroke-width="1.3"/><path d="M1 15L15 1" stroke="#333"/><path d="M11 1H15V5M1 11V15H5" fill="#333"/><rect x="6.2" y="6.2" width="3.6" height="3.6" fill="#fff" stroke="#5050c0" stroke-width="1.1"/></g></svg>
<svg style="position:absolute;left:1111px;top:102px;" width="16" height="16" viewBox="0 0 16 16"><g fill="none"><path d="M2 14L14 2" stroke="#a8aec0" stroke-width="0.8" stroke-dasharray="1 1"/><rect x="2.2" y="10.2" width="3.6" height="3.6" fill="#fff" stroke="#5050c0" stroke-width="1.1"/><rect x="8.2" y="4.2" width="3.6" height="3.6" fill="#fff" stroke="#5050c0" stroke-width="1.1"/></g></svg>
<svg style="position:absolute;left:1134px;top:102px;" width="16" height="16" viewBox="0 0 16 16"><g fill="none"><path d="M8 1V15" stroke="#a8aec0" stroke-width="0.8" stroke-dasharray="1 1"/><rect x="6.2" y="11.2" width="3.6" height="3.6" fill="#fff" stroke="#5050c0" stroke-width="1.1"/></g></svg>
<svg style="position:absolute;left:1156px;top:102px;" width="16" height="16" viewBox="0 0 16 16"><g fill="none"><path d="M1 8H15" stroke="#a8aec0" stroke-width="0.8" stroke-dasharray="2 1"/><rect x="2.2" y="6.2" width="3.6" height="3.6" fill="#fff" stroke="#5050c0" stroke-width="1.1"/></g></svg>
<div style="position:absolute;left:0px;top:123px;width:26px;height:507px;background:#f0f0f0;border-right:1px solid #c6c6c6;"></div>
<div style="position:absolute;left:3px;top:127px;width:20px;height:3px;background:repeating-linear-gradient(90deg,#c0c0c0 0 2px,#fafafa 2px 4px);"></div>
<div style="position:absolute;left:2px;top:134px;width:22px;height:21px;border:1px solid #777;border-radius:3px;background:linear-gradient(#e8e8e8,#cfcfcf);"></div>
<svg style="position:absolute;left:5px;top:136px;" width="16" height="16" viewBox="0 0 16 16"><g fill="none"><path d="M4 1V13L7 10L9.5 15L11.5 14L9 9H13Z" fill="#fff" stroke="#000" stroke-width="1.1"/></g></svg>
<svg style="position:absolute;left:19px;top:149px;" width="5" height="5" viewBox="0 0 5 5"><path d="M5 0V5H0Z" fill="#000"/></svg>
<svg style="position:absolute;left:5px;top:158px;" width="16" height="16" viewBox="0 0 16 16"><g fill="none"><path d="M2 14L14 2" stroke="#a8aec0" stroke-width="0.8" stroke-dasharray="2 1"/><rect x="3.2" y="9.2" width="3.6" height="3.6" fill="#fff" stroke="#5050c0" stroke-width="1.1"/><rect x="9.2" y="3.2" width="3.6" height="3.6" fill="#fff" stroke="#5050c0" stroke-width="1.1"/></g></svg>
<svg style="position:absolute;left:19px;top:171px;" width="5" height="5" viewBox="0 0 5 5"><path d="M5 0V5H0Z" fill="#000"/></svg>
<svg style="position:absolute;left:5px;top:180px;" width="16" height="16" viewBox="0 0 16 16"><g fill="none"><circle cx="8" cy="8" r="1.3" fill="#333"/></g></svg>
<svg style="position:absolute;left:19px;top:193px;" width="5" height="5" viewBox="0 0 5 5"><path d="M5 0V5H0Z" fill="#000"/></svg>
<svg style="position:absolute;left:5px;top:202px;" width="16" height="16" viewBox="0 0 16 16"><g fill="none"><rect x="2.5" y="2.5" width="11" height="11" fill="none" stroke="#333" stroke-width="1.2"/><rect x="1.0" y="1.0" width="3.0" height="3.0" fill="#fff" stroke="#5050c0" stroke-width="1.1"/><rect x="12.0" y="12.0" width="3.0" height="3.0" fill="#fff" stroke="#5050c0" stroke-width="1.1"/></g></svg>
<svg style="position:absolute;left:19px;top:215px;" width="5" height="5" viewBox="0 0 5 5"><path d="M5 0V5H0Z" fill="#000"/></svg>
<svg style="position:absolute;left:5px;top:224px;" width="16" height="16" viewBox="0 0 16 16"><g fill="none"><path d="M2 9L9 2M5 13L12 6" stroke="#333" stroke-width="1.1"/><rect x="10.5" y="1.5" width="3.0" height="3.0" fill="#fff" stroke="#5050c0" stroke-width="1.1"/><rect x="1.5" y="11.5" width="3.0" height="3.0" fill="#fff" stroke="#5050c0" stroke-width="1.1"/></g></svg>
<svg style="position:absolute;left:19px;top:237px;" width="5" height="5" viewBox="0 0 5 5"><path d="M5 0V5H0Z" fill="#000"/></svg>
<svg style="position:absolute;left:5px;top:246px;" width="16" height="16" viewBox="0 0 16 16"><g fill="none"><path d="M2 9L9 2" stroke="#333" stroke-width="1.1"/><path d="M5 13L12 6" stroke="#333" stroke-dasharray="1.5 1"/><rect x="10.5" y="1.5" width="3.0" height="3.0" fill="#fff" stroke="#5050c0" stroke-width="1.1"/><rect x="1.5" y="11.5" width="3.0" height="3.0" fill="#fff" stroke="#5050c0" stroke-width="1.1"/></g></svg>
<svg style="position:absolute;left:19px;top:259px;" width="5" height="5" viewBox="0 0 5 5"><path d="M5 0V5H0Z" fill="#000"/></svg>
<svg style="position:absolute;left:5px;top:268px;" width="16" height="16" viewBox="0 0 16 16"><g fill="none"><circle cx="8" cy="8" r="6" fill="none" stroke="#333" stroke-width="1.1"/><rect x="6.7" y="6.7" width="2.6" height="2.6" fill="#fff" stroke="#5050c0" stroke-width="1.1"/><rect x="12.5" y="6.5" width="3.0" height="3.0" fill="#fff" stroke="#5050c0" stroke-width="1.1"/></g></svg>
<svg style="position:absolute;left:19px;top:281px;" width="5" height="5" viewBox="0 0 5 5"><path d="M5 0V5H0Z" fill="#000"/></svg>
<svg style="position:absolute;left:5px;top:290px;" width="16" height="16" viewBox="0 0 16 16"><g fill="none"><path d="M2 12Q2 2 8 2Q14 2 14 9" fill="none" stroke="#333" stroke-width="1.1"/><path d="M8 9H14" stroke="#333"/><rect x="0.5" y="11.5" width="3.0" height="3.0" fill="#fff" stroke="#5050c0" stroke-width="1.1"/><rect x="6.7" y="7.7" width="2.6" height="2.6" fill="#fff" stroke="#5050c0" stroke-width="1.1"/><rect x="12.5" y="7.5" width="3.0" height="3.0" fill="#fff" stroke="#5050c0" stroke-width="1.1"/></g></svg>
<svg style="position:absolute;left:19px;top:303px;" width="5" height="5" viewBox="0 0 5 5"><path d="M5 0V5H0Z" fill="#000"/></svg>
<svg style="position:absolute;left:5px;top:312px;" width="16" height="16" viewBox="0 0 16 16"><g fill="none"><path d="M2 14L6 10L8 6Q7 4 10 3L13 2" fill="none" stroke="#333" stroke-width="1.1"/><rect x="0.5" y="12.5" width="3.0" height="3.0" fill="#fff" stroke="#5050c0" stroke-width="1.1"/><rect x="7.5" y="9.5" width="3.0" height="3.0" fill="#fff" stroke="#5050c0" stroke-width="1.1"/><rect x="3.5" y="3.5" width="3.0" height="3.0" fill="#fff" stroke="#5050c0" stroke-width="1.1"/><rect x="11.5" y="0.5" width="3.0" height="3.0" fill="#fff" stroke="#5050c0" stroke-width="1.1"/></g></svg>
<svg style="position:absolute;left:19px;top:325px;" width="5" height="5" viewBox="0 0 5 5"><path d="M5 0V5H0Z" fill="#000"/></svg>
<svg style="position:absolute;left:5px;top:334px;" width="16" height="16" viewBox="0 0 16 16"><g fill="none"><path d="M2 5L5 2H14V11L11 14H2Z" fill="#fff" stroke="#333" stroke-width="1.1"/><path d="M2 5H11V14M11 5L14 2" fill="none" stroke="#333"/><rect x="0.5" y="12.5" width="3.0" height="3.0" fill="#fff" stroke="#5050c0" stroke-width="1.1"/><rect x="12.5" y="0.5" width="3.0" height="3.0" fill="#fff" stroke="#5050c0" stroke-width="1.1"/><rect x="12.5" y="9.5" width="3.0" height="3.0" fill="#fff" stroke="#5050c0" stroke-width="1.1"/></g></svg>
<svg style="position:absolute;left:19px;top:347px;" width="5" height="5" viewBox="0 0 5 5"><path d="M5 0V5H0Z" fill="#000"/></svg>
<svg style="position:absolute;left:5px;top:356px;" width="16" height="16" viewBox="0 0 16 16"><g fill="none"><path d="M3 4L12 1V11L3 14Z" fill="#888" stroke="#333"/><path d="M3 4V14" stroke="#333"/><rect x="1.5" y="12.5" width="3.0" height="3.0" fill="#fff" stroke="#5050c0" stroke-width="1.1"/><rect x="11.5" y="10.5" width="3.0" height="3.0" fill="#fff" stroke="#5050c0" stroke-width="1.1"/></g></svg>
<svg style="position:absolute;left:19px;top:369px;" width="5" height="5" viewBox="0 0 5 5"><path d="M5 0V5H0Z" fill="#000"/></svg>
<svg style="position:absolute;left:5px;top:378px;" width="16" height="16" viewBox="0 0 16 16"><g fill="none"><path d="M8 1V15M1 8H15" stroke="#555"/><path d="M8 1L6 4H10ZM8 15L6 12H10ZM1 8L4 6V10ZM15 8L12 6V10Z" fill="none" stroke="#555"/><path d="M0 0H16M0 16H16" stroke="#ccc"/></g></svg>
<svg style="position:absolute;left:19px;top:391px;" width="5" height="5" viewBox="0 0 5 5"><path d="M5 0V5H0Z" fill="#000"/></svg>
<svg style="position:absolute;left:5px;top:400px;" width="16" height="16" viewBox="0 0 16 16"><g fill="none"><path d="M1.5 15L8 1.5L14.5 15M4.5 9.5H11.5" fill="none" stroke="#333" stroke-width="2"/><path d="M0 15H4M12 15H16" stroke="#333" stroke-width="1.3"/></g></svg>
<svg style="position:absolute;left:19px;top:413px;" width="5" height="5" viewBox="0 0 5 5"><path d="M5 0V5H0Z" fill="#000"/></svg>
<svg style="position:absolute;left:5px;top:422px;" width="16" height="16" viewBox="0 0 16 16"><g fill="none"><rect x="1" y="1" width="7" height="7" fill="#fff" stroke="#333"/><rect x="1" y="1" width="3" height="3" fill="#e03040"/><path d="M5 5H15V15H5Z" fill="#3a3ae0" stroke="#222"/><path d="M8 6L13 11" stroke="#e04080"/></g></svg>
<svg style="position:absolute;left:19px;top:435px;" width="5" height="5" viewBox="0 0 5 5"><path d="M5 0V5H0Z" fill="#000"/></svg>
<svg style="position:absolute;left:5px;top:444px;" width="16" height="16" viewBox="0 0 16 16"><g fill="none"><circle cx="8" cy="8" r="7" fill="#f0f8c0" stroke="#70b030" stroke-width="1.3"/><path d="M4 4L7 7M7 4V7H4M12 4L9 7M9 4V7H12M4 12L7 9M7 12V9H4M12 12L9 9M9 12V9H12" fill="none" stroke="#3a3ab0"/></g></svg>
<svg style="position:absolute;left:19px;top:457px;" width="5" height="5" viewBox="0 0 5 5"><path d="M5 0V5H0Z" fill="#000"/></svg>
<svg style="position:absolute;left:5px;top:466px;" width="16" height="16" viewBox="0 0 16 16"><g fill="none"><text x="0" y="7" font-size="7" fill="#333" font-family="Liberation Sans">&#x21bb;</text><circle cx="3" cy="4" r="2.5" fill="none" stroke="#333"/><path d="M4 14L13 5" stroke="#3a3ab0"/><rect x="2.7" y="12.7" width="2.6" height="2.6" fill="#fff" stroke="#5050c0" stroke-width="1.1"/><rect x="11.7" y="3.7" width="2.6" height="2.6" fill="#fff" stroke="#5050c0" stroke-width="1.1"/></g></svg>
<svg style="position:absolute;left:19px;top:479px;" width="5" height="5" viewBox="0 0 5 5"><path d="M5 0V5H0Z" fill="#000"/></svg>
<svg style="position:absolute;left:5px;top:488px;" width="16" height="16" viewBox="0 0 16 16"><g fill="none"><path d="M5 1H11V4H14Q15.5 8 14 12H11V15H5V12H2Q0.5 8 2 4H5Z" fill="#f0c0c0" stroke="#b82030" stroke-width="1.3"/><rect x="6.5" y="3" width="3" height="10" fill="#fff" stroke="#b82030"/></g></svg>
<svg style="position:absolute;left:19px;top:501px;" width="5" height="5" viewBox="0 0 5 5"><path d="M5 0V5H0Z" fill="#000"/></svg>
<svg style="position:absolute;left:5px;top:510px;" width="16" height="16" viewBox="0 0 16 16"><g fill="none"><path d="M1 6H8V15H1Z" fill="#3a88b0" stroke="#1a4a70"/><circle cx="10" cy="6" r="4.5" fill="none" stroke="#888"/><path d="M8 6H10V8Q8 8 8 6" fill="#3a88b0"/></g></svg>
<svg style="position:absolute;left:19px;top:523px;" width="5" height="5" viewBox="0 0 5 5"><path d="M5 0V5H0Z" fill="#000"/></svg>
<svg style="position:absolute;left:5px;top:532px;" width="16" height="16" viewBox="0 0 16 16"><g fill="none"><path d="M1 6L5 2L11 8L7 12Z" fill="#e8e840" stroke="#333"/><path d="M2 5L4 7" stroke="#333"/><g fill="#333"><rect x="10" y="11" width="1.5" height="1.5"/><rect x="13" y="9" width="1.5" height="1.5"/><rect x="4" y="13" width="1.5" height="1.5"/><rect x="13" y="14" width="1.5" height="1.5"/></g></g></svg>
<svg style="position:absolute;left:19px;top:545px;" width="5" height="5" viewBox="0 0 5 5"><path d="M5 0V5H0Z" fill="#000"/></svg>
<svg style="position:absolute;left:5px;top:561px;" width="16" height="16" viewBox="0 0 16 16"><g fill="none"><rect x="3" y="3" width="10" height="10" fill="#e8e8f4" stroke="#333"/><g fill="#333"><rect x="1" y="1" width="3.5" height="3.5"/><rect x="11.5" y="1" width="3.5" height="3.5"/><rect x="1" y="11.5" width="3.5" height="3.5"/><rect x="11.5" y="11.5" width="3.5" height="3.5"/><rect x="6.5" y="1.5" width="3" height="2"/><rect x="1.5" y="6.5" width="2" height="3"/></g></g></svg>
<svg style="position:absolute;left:19px;top:574px;" width="5" height="5" viewBox="0 0 5 5"><path d="M5 0V5H0Z" fill="#000"/></svg>
<svg style="position:absolute;left:5px;top:588px;" width="16" height="16" viewBox="0 0 16 16"><g fill="none"><rect x="1.5" y="1.5" width="8" height="9" fill="none" stroke="#c05060"/><rect x="3.5" y="3.5" width="8" height="9" fill="none" stroke="#804050"/><rect x="5.5" y="5.5" width="8" height="9" fill="none" stroke="#333"/></g></svg>
<svg style="position:absolute;left:19px;top:601px;" width="5" height="5" viewBox="0 0 5 5"><path d="M5 0V5H0Z" fill="#000"/></svg>
<svg style="position:absolute;left:5px;top:610px;" width="16" height="16" viewBox="0 0 16 16"><g fill="none"><path d="M2 14L14 2" stroke="#999" stroke-dasharray="2 1"/><path d="M1 9V15H7Z" fill="#2a2ae0"/><path d="M9 1H15V7Z" fill="#e03040"/><circle cx="8" cy="8" r="2" fill="none" stroke="#999"/></g></svg>
<svg style="position:absolute;left:19px;top:623px;" width="5" height="5" viewBox="0 0 5 5"><path d="M5 0V5H0Z" fill="#000"/></svg>
<div style="position:absolute;left:2px;top:555px;width:22px;height:1px;background:#b0b0b0;"></div>
<div style="position:absolute;left:2px;top:582px;width:22px;height:1px;background:#b0b0b0;"></div>
<div style="position:absolute;left:26px;top:123px;width:1080px;height:18px;background:#f0f0f0;"></div>
<div style="position:absolute;left:26px;top:141px;width:18px;height:500px;background:#f0f0f0;"></div>
<div style="position:absolute;left:25px;top:123px;width:2px;height:518px;background:#c4c4c4;"></div>
<div style="position:absolute;left:0px;top:629px;width:25px;height:1px;background:#c8c8c8;"></div>
<div style="position:absolute;left:28px;top:125px;width:13px;height:13px;background:#c8c8c4;"></div>
<svg style="position:absolute;left:28px;top:125px;" width="13" height="13" viewBox="0 0 13 13"><path d="M3.5 2V10.5H11M1.5 4.5L3.5 2L5.5 4.5M8.5 8.5L11 10.5L8.5 12.5" fill="none" stroke="#000" stroke-width="1.1"/></svg>
<div style="position:absolute;left:42px;top:138px;width:1061px;height:3px;background:linear-gradient(#c0c0c0,#8a8a8a);"></div>
<div style="position:absolute;left:42px;top:141px;width:2px;height:479px;background:linear-gradient(90deg,#c0c0c0,#8a8a8a);"></div>
<div style="position:absolute;left:53px;top:135px;width:1px;height:3px;background:#000;"></div>
<div style="position:absolute;left:71px;top:135px;width:1px;height:3px;background:#000;"></div>
<div style="position:absolute;left:90px;top:135px;width:1px;height:3px;background:#000;"></div>
<div style="position:absolute;left:108px;top:135px;width:1px;height:3px;background:#000;"></div>
<div style="position:absolute;left:126px;top:135px;width:1px;height:3px;background:#000;"></div>
<div style="position:absolute;left:144px;top:135px;width:1px;height:3px;background:#000;"></div>
<div style="position:absolute;left:162px;top:135px;width:1px;height:3px;background:#000;"></div>
<div style="position:absolute;left:180px;top:135px;width:1px;height:3px;background:#000;"></div>
<div style="position:absolute;left:199px;top:126px;width:1px;height:12px;background:#000;"></div>
<div style="position:absolute;left:217px;top:135px;width:1px;height:3px;background:#000;"></div>
<div style="position:absolute;left:235px;top:135px;width:1px;height:3px;background:#000;"></div>
<div style="position:absolute;left:253px;top:135px;width:1px;height:3px;background:#000;"></div>
<div style="position:absolute;left:271px;top:135px;width:1px;height:3px;background:#000;"></div>
<div style="position:absolute;left:289px;top:135px;width:1px;height:3px;background:#000;"></div>
<div style="position:absolute;left:308px;top:135px;width:1px;height:3px;background:#000;"></div>
<div style="position:absolute;left:326px;top:135px;width:1px;height:3px;background:#000;"></div>
<div style="position:absolute;left:344px;top:135px;width:1px;height:3px;background:#000;"></div>
<div style="position:absolute;left:362px;top:135px;width:1px;height:3px;background:#000;"></div>
<div style="position:absolute;left:380px;top:126px;width:1px;height:12px;background:#000;"></div>
<div style="position:absolute;left:398px;top:135px;width:1px;height:3px;background:#000;"></div>
<div style="position:absolute;left:417px;top:135px;width:1px;height:3px;background:#000;"></div>
<div style="position:absolute;left:435px;top:135px;width:1px;height:3px;background:#000;"></div>
<div style="position:absolute;left:453px;top:135px;width:1px;height:3px;background:#000;"></div>
<div style="position:absolute;left:471px;top:135px;width:1px;height:3px;background:#000;"></div>
<div style="position:absolute;left:489px;top:135px;width:1px;height:3px;background:#000;"></div>
<div style="position:absolute;left:507px;top:135px;width:1px;height:3px;background:#000;"></div>
<div style="position:absolute;left:526px;top:135px;width:1px;height:3px;background:#000;"></div>
<div style="position:absolute;left:544px;top:135px;width:1px;height:3px;background:#000;"></div>
<div style="position:absolute;left:562px;top:126px;width:1px;height:12px;background:#000;"></div>
<div style="position:absolute;left:580px;top:135px;width:1px;height:3px;background:#000;"></div>
<div style="position:absolute;left:598px;top:135px;width:1px;height:3px;background:#000;"></div>
<div style="position:absolute;left:617px;top:135px;width:1px;height:3px;background:#000;"></div>
<div style="position:absolute;left:635px;top:135px;width:1px;height:3px;background:#000;"></div>
<div style="position:absolute;left:653px;top:135px;width:1px;height:3px;background:#000;"></div>
<div style="position:absolute;left:671px;top:135px;width:1px;height:3px;background:#000;"></div>
<div style="position:absolute;left:689px;top:135px;width:1px;height:3px;background:#000;"></div>
<div style="position:absolute;left:707px;top:135px;width:1px;height:3px;background:#000;"></div>
<div style="position:absolute;left:726px;top:135px;width:1px;height:3px;background:#000;"></div>
<div style="position:absolute;left:744px;top:126px;width:1px;height:12px;background:#000;"></div>
<div style="position:absolute;left:762px;top:135px;width:1px;height:3px;background:#000;"></div>
<div style="position:absolute;left:780px;top:135px;width:1px;height:3px;background:#000;"></div>
<div style="position:absolute;left:798px;top:135px;width:1px;height:3px;background:#000;"></div>
<div style="position:absolute;left:816px;top:135px;width:1px;height:3px;background:#000;"></div>
<div style="position:absolute;left:835px;top:135px;width:1px;height:3px;background:#000;"></div>
<div style="position:absolute;left:853px;top:135px;width:1px;height:3px;background:#000;"></div>
<div style="position:absolute;left:871px;top:135px;width:1px;height:3px;background:#000;"></div>
<div style="position:absolute;left:889px;top:135px;width:1px;height:3px;background:#000;"></div>
<div style="position:absolute;left:907px;top:135px;width:1px;height:3px;background:#000;"></div>
<div style="position:absolute;left:925px;top:126px;width:1px;height:12px;background:#000;"></div>
<div style="position:absolute;left:944px;top:135px;width:1px;height:3px;background:#000;"></div>
<div style="position:absolute;left:962px;top:135px;width:1px;height:3px;background:#000;"></div>
<div style="position:absolute;left:980px;top:135px;width:1px;height:3px;background:#000;"></div>
<div style="position:absolute;left:998px;top:135px;width:1px;height:3px;background:#000;"></div>
<div style="position:absolute;left:1016px;top:135px;width:1px;height:3px;background:#000;"></div>
<div style="position:absolute;left:1034px;top:135px;width:1px;height:3px;background:#000;"></div>
<div style="position:absolute;left:1053px;top:135px;width:1px;height:3px;background:#000;"></div>
<div style="position:absolute;left:1071px;top:135px;width:1px;height:3px;background:#000;"></div>
<div style="position:absolute;left:1089px;top:135px;width:1px;height:3px;background:#000;"></div>
<div style="position:absolute;left:201px;top:126px;font-size:9px;line-height:11px;color:#000;white-space:nowrap;">-20 mm</div>
<div style="position:absolute;left:382px;top:126px;font-size:9px;line-height:11px;color:#000;white-space:nowrap;">-10 mm</div>
<div style="position:absolute;left:564px;top:126px;font-size:9px;line-height:11px;color:#000;white-space:nowrap;">0 mm</div>
<div style="position:absolute;left:746px;top:126px;font-size:9px;line-height:11px;color:#000;white-space:nowrap;">10 mm</div>
<div style="position:absolute;left:927px;top:126px;font-size:9px;line-height:11px;color:#000;white-space:nowrap;">20 mm</div>
<div style="position:absolute;left:822px;top:123px;width:1px;height:15px;background:#c040c0;"></div>
<div style="position:absolute;left:39px;top:639px;width:3px;height:1px;background:#000;"></div>
<div style="position:absolute;left:39px;top:621px;width:3px;height:1px;background:#000;"></div>
<div style="position:absolute;left:39px;top:602px;width:3px;height:1px;background:#000;"></div>
<div style="position:absolute;left:39px;top:584px;width:3px;height:1px;background:#000;"></div>
<div style="position:absolute;left:39px;top:566px;width:3px;height:1px;background:#000;"></div>
<div style="position:absolute;left:39px;top:548px;width:3px;height:1px;background:#000;"></div>
<div style="position:absolute;left:39px;top:530px;width:3px;height:1px;background:#000;"></div>
<div style="position:absolute;left:29px;top:512px;width:13px;height:1px;background:#000;"></div>
<div style="position:absolute;left:39px;top:493px;width:3px;height:1px;background:#000;"></div>
<div style="position:absolute;left:39px;top:475px;width:3px;height:1px;background:#000;"></div>
<div style="position:absolute;left:39px;top:457px;width:3px;height:1px;background:#000;"></div>
<div style="position:absolute;left:39px;top:439px;width:3px;height:1px;background:#000;"></div>
<div style="position:absolute;left:39px;top:421px;width:3px;height:1px;background:#000;"></div>
<div style="position:absolute;left:39px;top:403px;width:3px;height:1px;background:#000;"></div>
<div style="position:absolute;left:39px;top:384px;width:3px;height:1px;background:#000;"></div>
<div style="position:absolute;left:39px;top:366px;width:3px;height:1px;background:#000;"></div>
<div style="position:absolute;left:39px;top:348px;width:3px;height:1px;background:#000;"></div>
<div style="position:absolute;left:29px;top:330px;width:13px;height:1px;background:#000;"></div>
<div style="position:absolute;left:39px;top:312px;width:3px;height:1px;background:#000;"></div>
<div style="position:absolute;left:39px;top:294px;width:3px;height:1px;background:#000;"></div>
<div style="position:absolute;left:39px;top:275px;width:3px;height:1px;background:#000;"></div>
<div style="position:absolute;left:39px;top:257px;width:3px;height:1px;background:#000;"></div>
<div style="position:absolute;left:39px;top:239px;width:3px;height:1px;background:#000;"></div>
<div style="position:absolute;left:39px;top:221px;width:3px;height:1px;background:#000;"></div>
<div style="position:absolute;left:39px;top:203px;width:3px;height:1px;background:#000;"></div>
<div style="position:absolute;left:39px;top:185px;width:3px;height:1px;background:#000;"></div>
<div style="position:absolute;left:39px;top:166px;width:3px;height:1px;background:#000;"></div>
<div style="position:absolute;left:39px;top:148px;width:3px;height:1px;background:#000;"></div>
<div style="position:absolute;left:28.5px;top:326.5px;font-size:9.2px;line-height:11px;white-space:nowrap;transform:rotate(-90deg);transform-origin:0 0;">160 mm</div>
<div style="position:absolute;left:28.5px;top:509px;font-size:9.2px;line-height:11px;white-space:nowrap;transform:rotate(-90deg);transform-origin:0 0;">150 mm</div>
<div style="position:absolute;left:27px;top:436px;width:15px;height:1px;background:#c040c0;"></div>
<div style="position:absolute;left:44px;top:141px;width:1040px;height:479px;background:#fff;"></div>
<div style="position:absolute;left:1084px;top:141px;width:19px;height:479px;background:#f0f0f0;border-left:1px solid #e3e3e3;"></div>
<svg style="position:absolute;left:1089px;top:143px;" width="9" height="6" viewBox="0 0 9 6"><path d="M0 5L4.5 0L9 5Z" fill="#444"/></svg>
<div style="position:absolute;left:1085px;top:219px;width:17px;height:22px;border:1px solid #a0a0a0;border-radius:2px;background:linear-gradient(90deg,#f4f4f4,#dcdcdc);"></div>
<svg style="position:absolute;left:1089px;top:225px;" width="9" height="9" viewBox="0 0 9 9"><path d="M1 1.5H8M1 4.5H8M1 7.5H8" stroke="#555"/></svg>
<svg style="position:absolute;left:1089px;top:609px;" width="9" height="6" viewBox="0 0 9 6"><path d="M0 0L4.5 5L9 0Z" fill="#444"/></svg>
<svg style="position:absolute;left:0;top:0" width="1366" height="708"><ellipse cx="550.5" cy="204" rx="55" ry="54.5" fill="none" stroke="#000" stroke-width="1.1"/><rect x="739.5" y="144.5" width="182" height="182" fill="none" stroke="#000" stroke-width="1"/><rect x="452.5" y="269.5" width="183" height="241" fill="none" stroke="#000" stroke-width="1"/><path d="M633.5,389.5 L633.4,392.8 L633.2,396.6 L632.8,400.7 L632.3,404.8 L631.6,409.1 L630.7,413.4 L629.7,417.8 L628.6,422.2 L627.3,426.6 L625.9,430.9 L624.3,435.3 L622.6,439.6 L620.8,443.9 L618.8,448.1 L616.7,452.2 L614.5,456.3 L612.2,460.2 L609.8,464.1 L607.2,467.8 L604.6,471.5 L601.8,475.0 L599.0,478.4 L596.1,481.6 L593.1,484.7 L590.1,487.7 L587.0,490.4 L583.8,493.1 L580.6,495.5 L577.4,497.8 L574.1,499.9 L570.8,501.8 L567.5,503.5 L564.3,505.0 L561.0,506.3 L557.7,507.4 L554.5,508.4 L551.4,509.1 L548.4,509.6 L545.5,509.9 L543.0,510.0 L540.5,509.9 L537.6,509.6 L534.6,509.1 L531.5,508.4 L528.3,507.4 L525.0,506.3 L521.7,505.0 L518.5,503.5 L515.2,501.8 L511.9,499.9 L508.6,497.8 L505.4,495.5 L502.2,493.1 L499.0,490.4 L495.9,487.7 L492.9,484.7 L489.9,481.6 L487.0,478.4 L484.2,475.0 L481.4,471.5 L478.8,467.8 L476.2,464.1 L473.8,460.2 L471.5,456.3 L469.3,452.2 L467.2,448.1 L465.2,443.9 L463.4,439.6 L461.7,435.3 L460.1,430.9 L458.7,426.6 L457.4,422.2 L456.3,417.8 L455.3,413.4 L454.4,409.1 L453.7,404.8 L453.2,400.7 L452.8,396.6 L452.6,392.8 L452.5,389.5 L452.6,386.2 L452.8,382.4 L453.2,378.3 L453.7,374.2 L454.4,369.9 L455.3,365.6 L456.3,361.2 L457.4,356.8 L458.7,352.4 L460.1,348.1 L461.7,343.7 L463.4,339.4 L465.2,335.1 L467.2,330.9 L469.3,326.8 L471.5,322.7 L473.8,318.8 L476.2,314.9 L478.8,311.2 L481.4,307.5 L484.2,304.0 L487.0,300.6 L489.9,297.4 L492.9,294.3 L495.9,291.3 L499.0,288.6 L502.2,285.9 L505.4,283.5 L508.6,281.2 L511.9,279.1 L515.2,277.2 L518.5,275.5 L521.7,274.0 L525.0,272.7 L528.3,271.6 L531.5,270.6 L534.6,269.9 L537.6,269.4 L540.5,269.1 L543.0,269.0 L545.5,269.1 L548.4,269.4 L551.4,269.9 L554.5,270.6 L557.7,271.6 L561.0,272.7 L564.3,274.0 L567.5,275.5 L570.8,277.2 L574.1,279.1 L577.4,281.2 L580.6,283.5 L583.8,285.9 L587.0,288.6 L590.1,291.3 L593.1,294.3 L596.1,297.4 L599.0,300.6 L601.8,304.0 L604.6,307.5 L607.2,311.2 L609.8,314.9 L612.2,318.8 L614.5,322.7 L616.7,326.8 L618.8,330.9 L620.8,335.1 L622.6,339.4 L624.3,343.7 L625.9,348.1 L627.3,352.4 L628.6,356.8 L629.7,361.2 L630.7,365.6 L631.6,369.9 L632.3,374.2 L632.8,378.3 L633.2,382.4 L633.4,386.2Z" fill="none" stroke="#e020e0" stroke-width="2"/><path d="M598.3,390.0 L598.3,392.3 L598.1,395.0 L597.9,397.8 L597.6,400.7 L597.1,403.7 L596.6,406.7 L596.0,409.7 L595.3,412.8 L594.6,415.8 L593.7,418.9 L592.8,421.9 L591.7,424.9 L590.6,427.9 L589.5,430.8 L588.2,433.7 L586.9,436.5 L585.5,439.3 L584.0,442.0 L582.5,444.6 L580.9,447.2 L579.2,449.6 L577.5,452.0 L575.8,454.2 L574.0,456.4 L572.2,458.4 L570.3,460.4 L568.4,462.2 L566.5,463.9 L564.5,465.5 L562.5,466.9 L560.6,468.3 L558.6,469.4 L556.6,470.5 L554.6,471.4 L552.7,472.2 L550.7,472.9 L548.8,473.4 L547.0,473.7 L545.3,473.9 L543.8,474.0 L542.3,473.9 L540.6,473.7 L538.8,473.4 L536.9,472.9 L534.9,472.2 L533.0,471.4 L531.0,470.5 L529.0,469.4 L527.0,468.3 L525.1,466.9 L523.1,465.5 L521.1,463.9 L519.2,462.2 L517.3,460.4 L515.4,458.4 L513.6,456.4 L511.8,454.2 L510.1,452.0 L508.4,449.6 L506.7,447.2 L505.1,444.6 L503.6,442.0 L502.1,439.3 L500.7,436.5 L499.4,433.7 L498.1,430.8 L497.0,427.9 L495.9,424.9 L494.8,421.9 L493.9,418.9 L493.0,415.8 L492.3,412.8 L491.6,409.7 L491.0,406.7 L490.5,403.7 L490.0,400.7 L489.7,397.8 L489.5,395.0 L489.3,392.3 L489.3,390.0 L489.3,387.7 L489.5,385.0 L489.7,382.2 L490.0,379.3 L490.5,376.3 L491.0,373.3 L491.6,370.3 L492.3,367.2 L493.0,364.2 L493.9,361.1 L494.8,358.1 L495.9,355.1 L497.0,352.1 L498.1,349.2 L499.4,346.3 L500.7,343.5 L502.1,340.7 L503.6,338.0 L505.1,335.4 L506.7,332.8 L508.4,330.4 L510.1,328.0 L511.8,325.8 L513.6,323.6 L515.4,321.6 L517.3,319.6 L519.2,317.8 L521.1,316.1 L523.1,314.5 L525.1,313.1 L527.0,311.7 L529.0,310.6 L531.0,309.5 L533.0,308.6 L534.9,307.8 L536.9,307.1 L538.8,306.6 L540.6,306.3 L542.3,306.1 L543.8,306.0 L545.3,306.1 L547.0,306.3 L548.8,306.6 L550.7,307.1 L552.7,307.8 L554.6,308.6 L556.6,309.5 L558.6,310.6 L560.6,311.7 L562.5,313.1 L564.5,314.5 L566.5,316.1 L568.4,317.8 L570.3,319.6 L572.2,321.6 L574.0,323.6 L575.8,325.8 L577.5,328.0 L579.2,330.4 L580.9,332.8 L582.5,335.4 L584.0,338.0 L585.5,340.7 L586.9,343.5 L588.2,346.3 L589.5,349.2 L590.6,352.1 L591.7,355.1 L592.8,358.1 L593.7,361.1 L594.6,364.2 L595.3,367.2 L596.0,370.3 L596.6,373.3 L597.1,376.3 L597.6,379.3 L597.9,382.2 L598.1,385.0 L598.3,387.7Z" fill="none" stroke="#e020e0" stroke-width="2"/><line x1="543" y1="390.5" x2="654" y2="390.5" stroke="#000" stroke-width="1"/><rect x="448.5" y="265.5" width="7" height="7" fill="#0010f0" stroke="#000" stroke-width="1"/><rect x="539.5" y="265.5" width="7" height="7" fill="#0010f0" stroke="#000" stroke-width="1"/><rect x="630.5" y="265.5" width="7" height="7" fill="#0010f0" stroke="#000" stroke-width="1"/><rect x="448.5" y="385.5" width="7" height="7" fill="#0010f0" stroke="#000" stroke-width="1"/><rect x="630.5" y="385.5" width="7" height="7" fill="#0010f0" stroke="#000" stroke-width="1"/><rect x="448.5" y="506.5" width="7" height="7" fill="#0010f0" stroke="#000" stroke-width="1"/><rect x="539.5" y="506.5" width="7" height="7" fill="#0010f0" stroke="#000" stroke-width="1"/><rect x="630.5" y="506.5" width="7" height="7" fill="#0010f0" stroke="#000" stroke-width="1"/><circle cx="543" cy="389.5" r="4" fill="#f0f020" stroke="#333" stroke-width="0.8"/><circle cx="654" cy="389.5" r="4" fill="#30c030" stroke="#333" stroke-width="0.8"/><path d="M71.5 576V591.5" stroke="#1a8a2a" stroke-width="2"/><path d="M71 590.5H86.5" stroke="#2020c0" stroke-width="2"/><path d="M73.5 572.5L77.5 577L81.5 572.5M77.5 577V581" fill="none" stroke="#207a30" stroke-width="2"/><path d="M73.5 587.5H81.5L73.5 595H81.5" fill="none" stroke="#b02020" stroke-width="2"/><path d="M88.5 587L96.5 595.5M96.5 587L88.5 595.5" fill="none" stroke="#2020b0" stroke-width="2"/></svg>
<div style="position:absolute;left:44px;top:620px;width:1062px;height:21px;background:#f0f0f0;"></div>
<div style="position:absolute;left:52px;top:620px;width:66px;height:21px;background:#fff;border:1px solid #a0a0a0;border-top:none;border-bottom:2px solid #000;"></div>
<svg style="position:absolute;left:55px;top:622px;" width="15" height="15" viewBox="0 0 15 15"><path d="M1.5 4.5L4.5 1.5H11.5V8.5L8.5 11.5H1.5Z" fill="#fff" stroke="#111" stroke-width="1.2"/><path d="M1.5 4.5H8.5V11.5M8.5 4.5L11.5 1.5" fill="none" stroke="#111"/><circle cx="9.5" cy="10" r="4" fill="#888" stroke="#111"/><circle cx="8.5" cy="9" r="1.5" fill="#eee"/></svg>
<div style="position:absolute;left:73px;top:623px;font-size:11.6px;line-height:13.6px;color:#000;white-space:nowrap;font-weight:bold;">Model</div>
<div style="position:absolute;left:118px;top:621px;width:70px;height:19px;background:linear-gradient(#eaeaea,#d8d8d8);border:1px solid #a8a8a8;"></div>
<svg style="position:absolute;left:123px;top:624px;" width="12" height="13" viewBox="0 0 12 13"><path d="M1 0.5H8L11 3.5V12.5H1Z" fill="#fff" stroke="#333"/><text x="6" y="11" font-size="8" text-anchor="middle" font-family="Liberation Sans">1</text></svg>
<div style="position:absolute;left:139px;top:624px;font-size:10.8px;line-height:12.8px;color:#666;white-space:nowrap;">Paper 1</div>
<div style="position:absolute;left:214px;top:622px;width:870px;height:18px;background:linear-gradient(#e2e2e2,#ededed);"></div>
<div style="position:absolute;left:212px;top:621px;width:1px;height:19px;background:#6a6a6a;"></div>
<svg style="position:absolute;left:218px;top:627px;" width="6" height="8" viewBox="0 0 6 8"><path d="M5 0V8L0 4Z" fill="#444"/></svg>
<div style="position:absolute;left:580px;top:624px;width:138px;height:15px;border:1px solid #9a9a9a;border-radius:3px;background:linear-gradient(#f6f6f6,#d6d6d6);"></div>
<svg style="position:absolute;left:644px;top:627px;" width="9" height="9" viewBox="0 0 9 9"><path d="M1.5 1V8M4.5 1V8M7.5 1V8" stroke="#555"/></svg>
<svg style="position:absolute;left:1073px;top:627px;" width="6" height="8" viewBox="0 0 6 8"><path d="M0 0V8L5 4Z" fill="#444"/></svg>
<div style="position:absolute;left:0px;top:641px;width:1366px;height:42px;background:#f0f0f0;border-top:1px solid #e4e4e4;border-bottom:1px solid #c8c8c8;"></div>
<div style="position:absolute;left:4px;top:645px;width:3px;height:34px;background:repeating-linear-gradient(#c0c0c0 0 2px,#fafafa 2px 4px);"></div>
<svg style="position:absolute;left:12px;top:655px;" width="15" height="15" viewBox="0 0 15 15"><path d="M2 2L13 13M13 2L2 13" stroke="#e03030" stroke-width="3.2"/></svg>
<svg style="position:absolute;left:36px;top:655px;" width="16" height="15" viewBox="0 0 16 15"><rect x="0.5" y="0.5" width="15" height="14" fill="#fff" stroke="#3a3a9a"/><rect x="0.5" y="0.5" width="15" height="3" fill="#3a3a9a"/><path d="M3 6.5H13M3 9H13M3 11.5H13M5.5 5V13M8.5 5V13M11 5V13" stroke="#3a3a9a" stroke-width="0.8"/></svg>
<div style="position:absolute;left:56px;top:647px;width:1px;height:30px;background:#8c93a6;"></div>
<div style="position:absolute;left:57px;top:647px;width:1px;height:30px;background:#f4f6fb;"></div>
<div style="position:absolute;left:62px;top:647.5px;font-size:11px;line-height:13px;color:#000;white-space:nowrap;">Scale X</div>
<div style="position:absolute;left:61px;top:662px;width:39px;height:15px;background:#fff;border:1px solid #e0e0e0;border-top-color:#9a9a9a;border-left-color:#9a9a9a;overflow:hidden;"></div>
<div style="position:absolute;left:64px;top:663px;width:36px;height:14px;overflow:hidden;font-size:11.5px;line-height:15px;white-space:nowrap;">1</div>
<div style="position:absolute;left:101px;top:662px;width:10px;height:16px;background:linear-gradient(#f5f5f5,#d8d8d8);border:1px solid #b5b5b5;"></div>
<svg style="position:absolute;left:103px;top:664px;" width="6" height="12" viewBox="0 0 6 12"><path d="M0 4L3 1L6 4ZM0 8L3 11L6 8Z" fill="#6a7aa0"/></svg>
<div style="position:absolute;left:117px;top:647.5px;font-size:11px;line-height:13px;color:#000;white-space:nowrap;">Scale Y</div>
<div style="position:absolute;left:116px;top:662px;width:39px;height:15px;background:#fff;border:1px solid #e0e0e0;border-top-color:#9a9a9a;border-left-color:#9a9a9a;overflow:hidden;"></div>
<div style="position:absolute;left:119px;top:663px;width:36px;height:14px;overflow:hidden;font-size:11.5px;line-height:15px;white-space:nowrap;">1</div>
<div style="position:absolute;left:156px;top:662px;width:10px;height:16px;background:linear-gradient(#f5f5f5,#d8d8d8);border:1px solid #b5b5b5;"></div>
<svg style="position:absolute;left:158px;top:664px;" width="6" height="12" viewBox="0 0 6 12"><path d="M0 4L3 1L6 4ZM0 8L3 11L6 8Z" fill="#6a7aa0"/></svg>
<div style="position:absolute;left:172px;top:647.5px;font-size:11px;line-height:13px;color:#000;white-space:nowrap;">Size X</div>
<div style="position:absolute;left:171px;top:662px;width:53px;height:15px;background:#fff;border:1px solid #e0e0e0;border-top-color:#9a9a9a;border-left-color:#9a9a9a;overflow:hidden;"></div>
<div style="position:absolute;left:174px;top:663px;width:50px;height:14px;overflow:hidden;font-size:11.5px;line-height:15px;white-space:nowrap;">10 mm</div>
<div style="position:absolute;left:227px;top:647.5px;font-size:11px;line-height:13px;color:#000;white-space:nowrap;">Size Y</div>
<div style="position:absolute;left:226px;top:662px;width:53px;height:15px;background:#fff;border:1px solid #e0e0e0;border-top-color:#9a9a9a;border-left-color:#9a9a9a;overflow:hidden;"></div>
<div style="position:absolute;left:229px;top:663px;width:50px;height:14px;overflow:hidden;font-size:11.5px;line-height:15px;white-space:nowrap;">13,237448</div>
<div style="position:absolute;left:282px;top:647.5px;font-size:11px;line-height:13px;color:#000;white-space:nowrap;">Pos X</div>
<div style="position:absolute;left:281px;top:662px;width:53px;height:15px;background:#fff;border:1px solid #e0e0e0;border-top-color:#9a9a9a;border-left-color:#9a9a9a;overflow:hidden;"></div>
<div style="position:absolute;left:284px;top:663px;width:50px;height:14px;overflow:hidden;font-size:11.5px;line-height:15px;white-space:nowrap;">-1,009676</div>
<div style="position:absolute;left:337px;top:647.5px;font-size:11px;line-height:13px;color:#000;white-space:nowrap;">Pos Y</div>
<div style="position:absolute;left:336px;top:662px;width:53px;height:15px;background:#fff;border:1px solid #e0e0e0;border-top-color:#9a9a9a;border-left-color:#9a9a9a;overflow:hidden;"></div>
<div style="position:absolute;left:339px;top:663px;width:50px;height:14px;overflow:hidden;font-size:11.5px;line-height:15px;white-space:nowrap;">156,70502</div>
<div style="position:absolute;left:392px;top:647.5px;font-size:11px;line-height:13px;color:#000;white-space:nowrap;">Delta X</div>
<div style="position:absolute;left:391px;top:662px;width:53px;height:15px;background:#fff;border:1px solid #e0e0e0;border-top-color:#9a9a9a;border-left-color:#9a9a9a;overflow:hidden;"></div>
<div style="position:absolute;left:394px;top:663px;width:50px;height:14px;overflow:hidden;font-size:11.5px;line-height:15px;white-space:nowrap;">0 mm</div>
<div style="position:absolute;left:447px;top:647.5px;font-size:11px;line-height:13px;color:#000;white-space:nowrap;">Delta Y</div>
<div style="position:absolute;left:446px;top:662px;width:53px;height:15px;background:#fff;border:1px solid #e0e0e0;border-top-color:#9a9a9a;border-left-color:#9a9a9a;overflow:hidden;"></div>
<div style="position:absolute;left:449px;top:663px;width:50px;height:14px;overflow:hidden;font-size:11.5px;line-height:15px;white-space:nowrap;">0 mm</div>
<div style="position:absolute;left:502px;top:647.5px;font-size:11px;line-height:13px;color:#000;white-space:nowrap;">Rot</div>
<div style="position:absolute;left:501px;top:662px;width:39px;height:15px;background:#fff;border:1px solid #e0e0e0;border-top-color:#9a9a9a;border-left-color:#9a9a9a;overflow:hidden;"></div>
<div style="position:absolute;left:504px;top:663px;width:36px;height:14px;overflow:hidden;font-size:11.5px;line-height:15px;white-space:nowrap;">0</div>
<div style="position:absolute;left:541px;top:662px;width:10px;height:16px;background:linear-gradient(#f5f5f5,#d8d8d8);border:1px solid #b5b5b5;"></div>
<svg style="position:absolute;left:543px;top:664px;" width="6" height="12" viewBox="0 0 6 12"><path d="M0 4L3 1L6 4ZM0 8L3 11L6 8Z" fill="#6a7aa0"/></svg>
<div style="position:absolute;left:557px;top:647.5px;font-size:11px;line-height:13px;color:#000;white-space:nowrap;">Delta Dist</div>
<div style="position:absolute;left:556px;top:662px;width:52px;height:15px;background:#fff;border:1px solid #e0e0e0;border-top-color:#9a9a9a;border-left-color:#9a9a9a;overflow:hidden;"></div>
<div style="position:absolute;left:559px;top:663px;width:49px;height:14px;overflow:hidden;font-size:11.5px;line-height:15px;white-space:nowrap;">0 mm</div>
<div style="position:absolute;left:612px;top:647.5px;font-size:11px;line-height:13px;color:#000;white-space:nowrap;">Delta Ang</div>
<div style="position:absolute;left:611px;top:662px;width:39px;height:15px;background:#fff;border:1px solid #e0e0e0;border-top-color:#9a9a9a;border-left-color:#9a9a9a;overflow:hidden;"></div>
<div style="position:absolute;left:614px;top:663px;width:36px;height:14px;overflow:hidden;font-size:11.5px;line-height:15px;white-space:nowrap;">0</div>
<div style="position:absolute;left:651px;top:662px;width:10px;height:16px;background:linear-gradient(#f5f5f5,#d8d8d8);border:1px solid #b5b5b5;"></div>
<svg style="position:absolute;left:653px;top:664px;" width="6" height="12" viewBox="0 0 6 12"><path d="M0 4L3 1L6 4ZM0 8L3 11L6 8Z" fill="#6a7aa0"/></svg>
<div style="position:absolute;left:668px;top:647px;width:1px;height:30px;background:#8c93a6;"></div>
<div style="position:absolute;left:669px;top:647px;width:1px;height:30px;background:#f4f6fb;"></div>
<div style="position:absolute;left:693px;top:652px;width:21px;height:21px;border:1px solid #4e5462;border-radius:3px;background:linear-gradient(135deg,#c4c8d2,#dfe2ea);"></div>
<div style="position:absolute;left:744px;top:652px;width:21px;height:21px;border:1px solid #4e5462;border-radius:3px;background:linear-gradient(135deg,#c4c8d2,#dfe2ea);"></div>
<div style="position:absolute;left:740px;top:647px;width:1px;height:30px;background:#8c93a6;"></div>
<div style="position:absolute;left:741px;top:647px;width:1px;height:30px;background:#f4f6fb;"></div>
<div style="position:absolute;left:833px;top:647px;width:1px;height:30px;background:#8c93a6;"></div>
<div style="position:absolute;left:834px;top:647px;width:1px;height:30px;background:#f4f6fb;"></div>
<svg style="position:absolute;left:673px;top:654px;" width="16" height="16" viewBox="0 0 16 16"><g fill="none"><rect x="1.5" y="8.5" width="6" height="6" fill="#fff" stroke="#333" stroke-width="1.2"/><rect x="3.5" y="10.5" width="2" height="2" fill="#333"/><path d="M4 8L7 3H13M7 8L9 5H13" fill="none" stroke="#333" stroke-width="1.1"/><rect x="12" y="2" width="3" height="5" fill="#3a70d0"/></g></svg>
<svg style="position:absolute;left:695px;top:654px;" width="16" height="16" viewBox="0 0 16 16"><g fill="none"><rect x="1.5" y="1.5" width="6" height="6" fill="#fff" stroke="#222" stroke-width="1.2"/><rect x="8" y="8" width="7" height="7" fill="#fff" stroke="#222"/><circle cx="11.5" cy="11.5" r="2" fill="none" stroke="#222"/><path d="M2 15L15 2" stroke="#aaa"/></g></svg>
<svg style="position:absolute;left:717px;top:654px;" width="16" height="16" viewBox="0 0 16 16"><g fill="none"><path d="M2 14V10Q2 7 6 7H10Q13 7 13 3V1M4 14V10Q4 9 6 9H10Q15 9 15 3V1" fill="none" stroke="#333" stroke-width="1"/><path d="M6 7L10 9" stroke="#5a8ae0" stroke-width="2"/><path d="M10 10L14 14M14 11V14H11" fill="none" stroke="#7a9ae0" stroke-width="1.3"/></g></svg>
<svg style="position:absolute;left:746px;top:654px;" width="16" height="16" viewBox="0 0 16 16"><g fill="none"><rect x="0.5" y="0.5" width="15" height="15" fill="#111"/><path d="M2 2H14V14Z" fill="#20e020"/><path d="M2 2V14H14Z" fill="#1a8080"/><path d="M2 2H14V14" fill="none" stroke="#fff" stroke-dasharray="1 1"/></g></svg>
<svg style="position:absolute;left:768px;top:654px;" width="16" height="16" viewBox="0 0 16 16"><g fill="none"><path d="M1.5 3.5L12.5 14.5H1.5Z" fill="#48a8a0" stroke="#222" stroke-width="1.2"/><rect x="7" y="0" width="9" height="7" fill="#333"/><text x="11.5" y="6.2" font-size="6.5" font-weight="bold" text-anchor="middle" fill="#fff" font-family="Liberation Sans" letter-spacing="-0.5">WP</text></g></svg>
<svg style="position:absolute;left:790px;top:654px;" width="16" height="16" viewBox="0 0 16 16"><g fill="none"><path d="M1.5 2.5L13.5 14.5H1.5Z" fill="#50e050" stroke="#222" stroke-width="1.2" stroke-dasharray="1.5 1"/><rect x="7" y="0" width="9" height="7" fill="#333"/><text x="11.5" y="6.2" font-size="6.5" font-weight="bold" text-anchor="middle" fill="#fff" font-family="Liberation Sans" letter-spacing="-0.5">CP</text></g></svg>
<svg style="position:absolute;left:812px;top:654px;" width="16" height="16" viewBox="0 0 16 16"><g fill="none"><path d="M1.5 4.5H9V7.5H12V15H7V12H1.5Z" fill="#b0f0a0" stroke="#3a7a3a" stroke-width="1.1"/><rect x="10" y="0" width="6" height="7.5" fill="#333"/><text x="13" y="6.5" font-size="7" font-weight="bold" text-anchor="middle" fill="#fff" font-family="Liberation Sans">F</text></g></svg>
<svg style="position:absolute;left:840px;top:654px;" width="16" height="16" viewBox="0 0 16 16"><g fill="none"><path d="M1 7L5 3V5H11Q15 5 15 9V11H10V9Q10 8 8 8H5V11Z" fill="#40c040" stroke="#1a601a"/><path d="M8 8V15L10 13L12 16L13 15L11 12H14Z" fill="#fff" stroke="#333"/></g></svg>
<svg style="position:absolute;left:861px;top:654px;" width="16" height="16" viewBox="0 0 16 16"><g fill="none"><path d="M1 2H8L5 8Z" fill="#e83040"/><path d="M7 15H14L11 9Z" fill="#5a90e8"/><path d="M1 2L14 15" stroke="#e0a0a0" stroke-dasharray="1 1"/></g></svg>
<svg style="position:absolute;left:883px;top:654px;" width="16" height="16" viewBox="0 0 16 16"><g fill="none"><path d="M1 14L7 2L14 14Z" fill="none" stroke="#333"/><path d="M4 14L7 6L11 14" fill="none" stroke="#333"/><path d="M6 15L10 8L15 15Z" fill="#f8d0d0" stroke="#d04050"/></g></svg>
<svg style="position:absolute;left:905px;top:654px;" width="16" height="16" viewBox="0 0 16 16"><g fill="none"><ellipse cx="8" cy="5" rx="4" ry="3.5" fill="#fff" stroke="#333"/><path d="M1 13Q1 8 8 8Q15 8 15 13V15H1Z" fill="#fff" stroke="#333"/><path d="M2 12H14" stroke="#333"/></g></svg>
<svg style="position:absolute;left:927px;top:654px;" width="16" height="16" viewBox="0 0 16 16"><g fill="none"><rect x="1" y="1" width="14" height="14" fill="none" stroke="#8080e0" stroke-dasharray="1 1"/><rect x="2" y="5" width="10" height="10" fill="#fff" stroke="#333" stroke-width="1.2"/><circle cx="7" cy="10" r="3" fill="none" stroke="#333"/><path d="M2 15L15 2" stroke="#d04080"/></g></svg>
<svg style="position:absolute;left:949px;top:654px;" width="16" height="16" viewBox="0 0 16 16"><g fill="none"><rect x="0.5" y="0.5" width="15" height="15" fill="#c8d4f0" stroke="#4a70c8"/><rect x="2.5" y="2.5" width="11" height="11" fill="#fff" stroke="#c03030"/><path d="M4 4L12 12M12 4L4 12" stroke="#e89020" stroke-width="2.2"/><circle cx="8" cy="8" r="1.5" fill="#e03030"/></g></svg>
<svg style="position:absolute;left:971px;top:654px;" width="16" height="16" viewBox="0 0 16 16"><g fill="none"><rect x="2.5" y="5.5" width="9" height="9" fill="none" stroke="#bbb" stroke-width="1.2"/><rect x="5" y="8" width="4" height="4" fill="none" stroke="#ccc"/><path d="M9 4L12 2" stroke="#ccc"/><circle cx="14" cy="2" r="1" fill="#ccc"/></g></svg>
<svg style="position:absolute;left:993px;top:654px;" width="16" height="16" viewBox="0 0 16 16"><g fill="none"><rect x="1.5" y="5.5" width="9" height="9" fill="none" stroke="#bbb" stroke-width="1.2"/><rect x="4" y="8" width="4" height="4" fill="none" stroke="#ccc"/><path d="M13 1V10M11 3L13 1L15 3M11 8L13 10L15 8" fill="none" stroke="#ccc"/></g></svg>
<svg style="position:absolute;left:1016px;top:654px;" width="16" height="16" viewBox="0 0 16 16"><g fill="none"><rect x="0.5" y="0.5" width="15" height="15" fill="#c8c8dc" stroke="#9090c0"/><rect x="3" y="3" width="10" height="10" fill="#f0f0f4" stroke="#444" stroke-width="1.1"/><circle cx="8" cy="8" r="3" fill="none" stroke="#444"/><path d="M1 15L15 1" stroke="#b080c0"/></g></svg>
<div style="position:absolute;left:0px;top:683px;width:1366px;height:25px;background:#f0f0f0;"></div>
<div style="position:absolute;left:9px;top:686.5px;font-size:11.6px;line-height:13.6px;color:#000;white-space:nowrap;">Edit the selected object(s)</div>
<div style="position:absolute;left:887px;top:689px;font-size:10.7px;line-height:12.7px;color:#000;white-space:nowrap;">SNAP</div>
<div style="position:absolute;left:925px;top:689px;font-size:10px;line-height:12px;color:#000;white-space:nowrap;">GEO</div>
<div style="position:absolute;left:919px;top:685px;width:1px;height:21px;background:#d0d0d0;"></div>
<div style="position:absolute;left:951px;top:685px;width:1px;height:21px;background:#d0d0d0;"></div>
<div style="position:absolute;left:1250px;top:685px;width:1px;height:21px;background:#d0d0d0;"></div>
<div style="position:absolute;left:1303px;top:685px;width:1px;height:21px;background:#d0d0d0;"></div>
<svg style="position:absolute;left:965px;top:688px;" width="10" height="17" viewBox="0 0 10 17"><rect x="1" y="1" width="7" height="6" fill="none" stroke="#333"/><text x="5" y="16" font-size="9" text-anchor="middle" font-family="Liberation Sans">X</text></svg>
<div style="position:absolute;left:978px;top:687px;width:73px;height:19px;background:#fff;border:1px solid #000;"></div>
<div style="position:absolute;left:980px;top:689px;width:70px;height:15px;overflow:hidden;font-size:10.8px;line-height:15px;white-space:nowrap;color:#000">14,284519 mm</div>
<svg style="position:absolute;left:1061px;top:688px;" width="10" height="17" viewBox="0 0 10 17"><rect x="1" y="1" width="7" height="6" fill="none" stroke="#333"/><text x="5" y="16" font-size="9" text-anchor="middle" font-family="Liberation Sans">Y</text></svg>
<div style="position:absolute;left:1074px;top:687px;width:73px;height:19px;background:#fff;border:1px solid #000;"></div>
<div style="position:absolute;left:1076px;top:689px;width:70px;height:15px;overflow:hidden;font-size:10.8px;line-height:15px;white-space:nowrap;color:#000">154,163572 m</div>
<svg style="position:absolute;left:1157px;top:688px;" width="10" height="17" viewBox="0 0 10 17"><rect x="1" y="1" width="7" height="6" fill="none" stroke="#333"/><text x="5" y="16" font-size="9" text-anchor="middle" font-family="Liberation Sans">Z</text></svg>
<div style="position:absolute;left:1170px;top:687px;width:73px;height:19px;background:#fff;border:1px solid #000;"></div>
<div style="position:absolute;left:1172px;top:689px;width:70px;height:15px;overflow:hidden;font-size:10.8px;line-height:15px;white-space:nowrap;color:#aaa">0 mm</div>
<div style="position:absolute;left:1253px;top:687px;font-size:11.1px;line-height:13.1px;color:#000;white-space:nowrap;">482%</div>
<div style="position:absolute;left:1309px;top:687px;font-size:10.7px;line-height:12.7px;color:#000;white-space:nowrap;">18:39</div>
<div style="position:absolute;left:1103px;top:123px;width:263px;height:560px;background:#f0f0f0;"></div>
<div style="position:absolute;left:1106px;top:123px;width:260px;height:1px;background:#404a58;"></div>
<div style="position:absolute;left:1106px;top:123px;width:1px;height:23px;background:#404a58;"></div>
<div style="position:absolute;left:1107px;top:124px;width:259px;height:22px;background:linear-gradient(#dbe4ee,#c8d6e6);"></div>
<div style="position:absolute;left:1110px;top:128px;font-size:12.5px;line-height:14.5px;color:#4a5868;white-space:nowrap;">Selection Info</div>
<svg style="position:absolute;left:1329px;top:127px;" width="16" height="16" viewBox="0 0 16 16"><ellipse cx="8" cy="9" rx="5.5" ry="5" fill="#e4e4e4" stroke="#707070" stroke-width="1.1"/><circle cx="10.5" cy="5.5" r="3.8" fill="#f4f4f4" stroke="#707070" stroke-width="1"/><ellipse cx="8" cy="10" rx="3" ry="2.5" fill="#b8b8b8"/><path d="M3.5 13L1 15.5" stroke="#555" stroke-width="1.4"/></svg>
<div style="position:absolute;left:1348px;top:126px;width:16px;height:16px;background:#a4a6ae;border:1px solid #f4f6f8;"></div>
<div style="position:absolute;left:1365px;top:123px;width:1px;height:23px;background:#404a58;"></div>
<svg style="position:absolute;left:1351px;top:129px;" width="10" height="10" viewBox="0 0 10 10"><path d="M1.5 1.5L8.5 8.5M8.5 1.5L1.5 8.5" stroke="#fff" stroke-width="2.2"/></svg>
<div style="position:absolute;left:1181px;top:153px;width:22px;height:21px;background:#fafafa;border-left:1px solid #a8a8a8;border-top:1px solid #a8a8a8;"></div>
<svg style="position:absolute;left:1115px;top:155px;" width="16" height="16" viewBox="0 0 16 16"><g fill="none"><rect x="1.5" y="3.5" width="10" height="12" fill="#fff" stroke="#111" stroke-width="1.2"/><path d="M3 6H8M3 9H6M3 12H8" stroke="#111"/><path d="M6 9L12 2L16 4L10 11Z" fill="#ddd" stroke="#111"/><path d="M13 1H16V6" fill="none" stroke="#111"/></g></svg>
<svg style="position:absolute;left:1138px;top:155px;" width="16" height="16" viewBox="0 0 16 16"><g fill="none"><text x="8" y="13.5" font-size="13" font-weight="bold" text-anchor="middle" fill="#000" font-family="Liberation Sans" letter-spacing="-0.8">All</text></g></svg>
<svg style="position:absolute;left:1161px;top:155px;" width="16" height="16" viewBox="0 0 16 16"><g fill="none"><path d="M2 3V8H14V3M5 2V8M8 2V8M11 2V8" fill="#ddd" stroke="#111"/><path d="M1 6H15" stroke="#111"/><path d="M4 10H12L8 15Z" fill="#111"/></g></svg>
<svg style="position:absolute;left:1184px;top:155px;" width="16" height="16" viewBox="0 0 16 16"><g fill="none"><ellipse cx="7" cy="5" rx="6" ry="3.5" fill="#40b0e0" stroke="#1a2a9a"/><circle cx="7" cy="5" r="2.2" fill="#1a2a9a"/><path d="M13 2H15M13 5H15M13 8H15" stroke="#111"/><rect x="1" y="10" width="13" height="2" fill="#e040e0"/><path d="M3 14H13" stroke="#111" stroke-width="1.2"/></g></svg>
<svg style="position:absolute;left:1207px;top:155px;" width="16" height="16" viewBox="0 0 16 16"><g fill="none"><path d="M1.5 1.5H6.5L8.5 3.5V11.5H1.5Z" fill="#fff" stroke="#111" stroke-width="1.1"/><path d="M6.5 5.5H11.5L14.5 8.5V15H6.5Z" fill="#fff" stroke="#111" stroke-width="1.1"/><path d="M3 4.5H6M3 6.5H6M3 8.5H6M8 9.5H13M8 11.5H13M8 13.5H13" stroke="#111" stroke-width="0.9"/></g></svg>
<svg style="position:absolute;left:1230px;top:155px;" width="16" height="16" viewBox="0 0 16 16"><g fill="none"><rect x="1" y="1.5" width="14" height="13" fill="#fff" stroke="#1a2070" stroke-width="1.3"/><rect x="1" y="1.5" width="14" height="3" fill="#1a2070"/><path d="M2 7.5H14M2 10H14M2 12.5H14M4.5 5V14M8 5V14M11.5 5V14" stroke="#1a2070" stroke-width="0.8"/></g></svg>
<svg style="position:absolute;left:1253px;top:155px;" width="16" height="16" viewBox="0 0 16 16"><g fill="none"><path d="M2 1V15M2 15L9 5" stroke="#1a2a9a" stroke-width="1.3"/><path d="M11 2V12M6 7H16M11 2L9.5 4H12.5ZM11 12L9.5 10H12.5ZM16 7L14 5.5V8.5Z" fill="#111" stroke="#111"/><rect x="0.7" y="0.19999999999999996" width="2.6" height="2.6" fill="#fff" stroke="#1a2a9a" stroke-width="1.1"/><rect x="0.7" y="13.2" width="2.6" height="2.6" fill="#fff" stroke="#1a2a9a" stroke-width="1.1"/></g></svg>
<svg style="position:absolute;left:1276px;top:155px;" width="16" height="16" viewBox="0 0 16 16"><g fill="none"><rect x="2.5" y="2.5" width="11" height="11" fill="none" stroke="#1a2a9a" stroke-width="1.2" stroke-dasharray="2 1"/><rect x="0.8999999999999999" y="0.8999999999999999" width="3.2" height="3.2" fill="#fff" stroke="#1a2a9a" stroke-width="1.1"/><rect x="11.9" y="0.8999999999999999" width="3.2" height="3.2" fill="#fff" stroke="#1a2a9a" stroke-width="1.1"/><rect x="0.8999999999999999" y="11.9" width="3.2" height="3.2" fill="#fff" stroke="#1a2a9a" stroke-width="1.1"/><rect x="11.9" y="11.9" width="3.2" height="3.2" fill="#fff" stroke="#1a2a9a" stroke-width="1.1"/><rect x="6.6" y="1.1" width="2.8" height="2.8" fill="#fff" stroke="#1a2a9a" stroke-width="1.1"/><rect x="6.6" y="12.1" width="2.8" height="2.8" fill="#fff" stroke="#1a2a9a" stroke-width="1.1"/><rect x="6" y="7" width="4" height="2.5" fill="#e02020"/><rect x="14" y="7" width="2" height="2" fill="#f0f020"/></g></svg>
<div style="position:absolute;left:1110px;top:181px;width:252px;height:55px;background:#fff;border:1px solid #8c8c8c;"></div>
<div style="position:absolute;left:1344px;top:182px;width:1px;height:53px;background:#c8c8c8;"></div>
<div style="position:absolute;left:1123px;top:190px;width:11px;height:1px;border-top:1px dotted #808080;"></div>
<svg style="position:absolute;left:1136px;top:183px;" width="14" height="14" viewBox="0 0 14 14"><path d="M2 12L12 2" stroke="#1a2a8a" stroke-width="1.2"/><circle cx="2" cy="12" r="1.5" fill="#1a2a8a"/><circle cx="12" cy="2" r="1.5" fill="#1a2a8a"/></svg>
<div style="position:absolute;left:1153px;top:182px;width:40px;height:16px;border:1px dotted #b8c8e0;"></div>
<div style="position:absolute;left:1155px;top:183px;font-size:12.5px;line-height:14.5px;color:#000;white-space:nowrap;">Polyline</div>
<div style="position:absolute;left:1110px;top:259px;width:235px;height:1px;background:#a0a0a0;"></div>
<div style="position:absolute;left:1110px;top:239px;width:62px;height:21px;background:#fff;border:1px solid #c0c0c0;border-bottom:none;"></div>
<div style="position:absolute;left:1116px;top:243px;font-size:10.7px;line-height:12.7px;color:#000;white-space:nowrap;">Properties</div>
<div style="position:absolute;left:1172px;top:241px;width:61px;height:19px;background:linear-gradient(#f0f0f0,#dcdcdc);border:1px solid #8c8c8c;"></div>
<div style="position:absolute;left:1177px;top:245px;font-size:10.3px;line-height:12.3px;color:#000;white-space:nowrap;">Constraints</div>
<div style="position:absolute;left:1110px;top:261px;width:235px;height:164px;background:#fff;"></div>
<div style="position:absolute;left:1110px;top:261px;width:235px;height:19px;background:linear-gradient(#fafafa,#ededed);border-bottom:1px solid #e0e0e0;"></div>
<div style="position:absolute;left:1116px;top:264px;font-size:11.7px;line-height:13.7px;color:#000;white-space:nowrap;">Property</div>
<div style="position:absolute;left:1241px;top:264px;font-size:11.6px;line-height:13.6px;color:#000;white-space:nowrap;">Value</div>
<svg style="position:absolute;left:1219px;top:265px;" width="6" height="8" viewBox="0 0 6 8"><path d="M1 7L5 1" stroke="#999"/></svg>
<div style="position:absolute;left:1234px;top:261px;width:1px;height:164px;background:#e8e8e8;"></div>
<div style="position:absolute;left:1132px;top:283px;width:213px;height:19px;background:#c4dcf6;border:1px dotted #506080;border-bottom:none;"></div>
<div style="position:absolute;left:1118px;top:288px;width:9px;height:9px;background:#fff;border:1px solid #8a98a8;"></div>
<div style="position:absolute;left:1120px;top:292px;width:5px;height:1px;background:#333;"></div>
<div style="position:absolute;left:1134px;top:286px;font-size:12px;line-height:14px;color:#000;white-space:nowrap;font-weight:bold;">Metrics</div>
<div style="position:absolute;left:1110px;top:321px;width:235px;height:1px;background:#ececec;"></div>
<div style="position:absolute;left:1153px;top:306px;font-size:12px;line-height:14px;color:#000;white-space:nowrap;">Object type</div>
<div style="position:absolute;left:1236px;top:304px;font-size:11.4px;line-height:13.4px;color:#000;white-space:nowrap;">Polyline</div>
<div style="position:absolute;left:1110px;top:341px;width:235px;height:1px;background:#ececec;"></div>
<div style="position:absolute;left:1153px;top:326px;font-size:12px;line-height:14px;color:#000;white-space:nowrap;">Length</div>
<div style="position:absolute;left:1236px;top:324px;font-size:11.4px;line-height:13.4px;color:#000;white-space:nowrap;">59,776505 mm</div>
<div style="position:absolute;left:1110px;top:361px;width:235px;height:1px;background:#ececec;"></div>
<div style="position:absolute;left:1153px;top:346px;font-size:12px;line-height:14px;color:#000;white-space:nowrap;">Number of v...</div>
<div style="position:absolute;left:1236px;top:344px;font-size:11.4px;line-height:13.4px;color:#000;white-space:nowrap;">163</div>
<div style="position:absolute;left:1110px;top:381px;width:235px;height:1px;background:#ececec;"></div>
<div style="position:absolute;left:1153px;top:366px;font-size:12px;line-height:14px;color:#000;white-space:nowrap;">Vertices</div>
<div style="position:absolute;left:1236px;top:364px;font-size:11.4px;line-height:13.4px;color:#000;white-space:nowrap;"></div>
<div style="position:absolute;left:1110px;top:401px;width:235px;height:1px;background:#ececec;"></div>
<div style="position:absolute;left:1153px;top:386px;font-size:12px;line-height:14px;color:#000;white-space:nowrap;">Area</div>
<div style="position:absolute;left:1236px;top:384px;font-size:11.4px;line-height:13.4px;color:#000;white-space:nowrap;">59,776505 sq mm</div>
<div style="position:absolute;left:1110px;top:421px;width:235px;height:1px;background:#ececec;"></div>
<div style="position:absolute;left:1153px;top:406px;font-size:12px;line-height:14px;color:#000;white-space:nowrap;">Perimeter</div>
<div style="position:absolute;left:1236px;top:404px;font-size:11.4px;line-height:13.4px;color:#000;white-space:nowrap;">59,776505 mm</div>
<div style="position:absolute;left:1142px;top:302px;width:1px;height:112px;border-left:1px dotted #909090;"></div>
<div style="position:absolute;left:1143px;top:312px;width:8px;height:1px;border-top:1px dotted #909090;"></div>
<div style="position:absolute;left:1143px;top:332px;width:8px;height:1px;border-top:1px dotted #909090;"></div>
<div style="position:absolute;left:1143px;top:352px;width:8px;height:1px;border-top:1px dotted #909090;"></div>
<div style="position:absolute;left:1143px;top:372px;width:8px;height:1px;border-top:1px dotted #909090;"></div>
<div style="position:absolute;left:1143px;top:392px;width:8px;height:1px;border-top:1px dotted #909090;"></div>
<div style="position:absolute;left:1143px;top:412px;width:8px;height:1px;border-top:1px dotted #909090;"></div>
<div style="position:absolute;left:1137px;top:368px;width:9px;height:9px;background:#fff;border:1px solid #8a98a8;"></div>
<div style="position:absolute;left:1139px;top:372px;width:5px;height:1px;background:#333;"></div>
<div style="position:absolute;left:1141px;top:370px;width:1px;height:5px;background:#333;"></div>
<div style="position:absolute;left:1345px;top:261px;width:17px;height:164px;background:#f0f0f0;"></div>
<svg style="position:absolute;left:1349px;top:286px;" width="9" height="5" viewBox="0 0 9 5"><path d="M0 5L4.5 0L9 5Z" fill="#333"/></svg>
<div style="position:absolute;left:1346px;top:393px;width:15px;height:17px;border:1px solid #999;border-radius:2px;background:linear-gradient(90deg,#f6f6f6,#dedede);"></div>
<svg style="position:absolute;left:1349px;top:397px;" width="9" height="9" viewBox="0 0 9 9"><path d="M1 1.5H8M1 4.5H8M1 7.5H8" stroke="#555"/></svg>
<svg style="position:absolute;left:1349px;top:416px;" width="9" height="5" viewBox="0 0 9 5"><path d="M0 0L4.5 5L9 0Z" fill="#333"/></svg>
<div style="position:absolute;left:1110px;top:431px;font-size:10.7px;line-height:12.7px;color:#000;white-space:nowrap;">1 of 3 selected:</div>
<div style="position:absolute;left:1110px;top:488px;width:252px;height:1px;background:#a0a0a0;"></div>
<div style="position:absolute;left:1110px;top:468px;width:54px;height:20px;background:linear-gradient(#f0f0f0,#dadada);border:1px solid #8c8c8c;"></div>
<svg style="position:absolute;left:1114px;top:470px;" width="16" height="16" viewBox="0 0 16 16"><g fill="none"><path d="M1 5L8 1L12 5V15H3Z" fill="#d01010" stroke="#400"/><path d="M6 1L12 7" stroke="#333" stroke-width="1.5"/><path d="M9 3L14 1L12 5" fill="#fff" stroke="#333"/></g></svg>
<div style="position:absolute;left:1131px;top:471px;font-size:11.6px;line-height:13.6px;color:#000;white-space:nowrap;">Tools</div>
<div style="position:absolute;left:1164px;top:466px;width:70px;height:23px;background:#fbfbfb;border:1px solid #b0b0b0;border-top:none;"></div>
<svg style="position:absolute;left:1168px;top:470px;" width="16" height="16" viewBox="0 0 16 16"><g fill="none"><path d="M2 1V13L5 10L7.5 15L9 14L7 9H11Z" fill="#1a2080" stroke="#1a2080"/><rect x="11" y="8" width="2" height="2" fill="#1a2080"/><rect x="11" y="12" width="2" height="2" fill="#1a2080"/></g></svg>
<div style="position:absolute;left:1185px;top:471px;font-size:11.6px;line-height:13.6px;color:#000;white-space:nowrap;">Selecti...</div>
<div style="position:absolute;left:1234px;top:468px;width:62px;height:20px;background:linear-gradient(#f0f0f0,#dadada);border:1px solid #8c8c8c;"></div>
<svg style="position:absolute;left:1238px;top:470px;" width="16" height="16" viewBox="0 0 16 16"><g fill="none"><rect x="1.5" y="6.5" width="6" height="8" fill="#fff" stroke="#111"/><rect x="5.5" y="1.5" width="9" height="9" fill="#fff" stroke="#1a2a9a" stroke-width="1.2"/><rect x="7.5" y="3.5" width="5" height="5" fill="#1a2a9a"/></g></svg>
<div style="position:absolute;left:1255px;top:471px;font-size:11.6px;line-height:13.6px;color:#000;white-space:nowrap;">Blocks</div>
<div style="position:absolute;left:1296px;top:468px;width:66px;height:20px;background:linear-gradient(#f0f0f0,#dadada);border:1px solid #8c8c8c;"></div>
<svg style="position:absolute;left:1300px;top:470px;" width="16" height="16" viewBox="0 0 16 16"><g fill="none"><rect x="0.5" y="3.5" width="15" height="10" fill="#40b0b0" stroke="#1a3a6a"/><rect x="2" y="5" width="12" height="2" fill="#d0f0f0"/><path d="M3 9H13M3 11H13" stroke="#1a3a6a" stroke-dasharray="1 1"/></g></svg>
<div style="position:absolute;left:1317px;top:471px;font-size:11.6px;line-height:13.6px;color:#000;white-space:nowrap;">Varia...</div>
<div style="position:absolute;left:1106px;top:496px;width:260px;height:1px;background:#404a58;"></div>
<div style="position:absolute;left:1106px;top:496px;width:1px;height:22px;background:#404a58;"></div>
<div style="position:absolute;left:1107px;top:497px;width:259px;height:21px;background:linear-gradient(#dbe4ee,#c8d6e6);"></div>
<div style="position:absolute;left:1110px;top:500px;font-size:12.5px;line-height:14.5px;color:#4a5868;white-space:nowrap;">Measurement Info</div>
<svg style="position:absolute;left:1329px;top:499px;" width="16" height="16" viewBox="0 0 16 16"><ellipse cx="8" cy="9" rx="5.5" ry="5" fill="#e4e4e4" stroke="#707070" stroke-width="1.1"/><circle cx="10.5" cy="5.5" r="3.8" fill="#f4f4f4" stroke="#707070" stroke-width="1"/><ellipse cx="8" cy="10" rx="3" ry="2.5" fill="#b8b8b8"/><path d="M3.5 13L1 15.5" stroke="#555" stroke-width="1.4"/></svg>
<div style="position:absolute;left:1348px;top:499px;width:16px;height:16px;background:#a4a6ae;border:1px solid #f4f6f8;"></div>
<div style="position:absolute;left:1365px;top:496px;width:1px;height:22px;background:#404a58;"></div>
<svg style="position:absolute;left:1351px;top:502px;" width="10" height="10" viewBox="0 0 10 10"><path d="M1.5 1.5L8.5 8.5M8.5 1.5L1.5 8.5" stroke="#fff" stroke-width="2.2"/></svg>
<div style="position:absolute;left:1112px;top:525px;width:22px;height:22px;background:#fbfbfb;border-left:1px solid #e0e0e0;border-top:1px solid #e0e0e0;"></div>
<svg style="position:absolute;left:1115px;top:529px;" width="16" height="16" viewBox="0 0 16 16"><rect x="1" y="1" width="13" height="12" fill="#fff" stroke="#111"/><path d="M3 4H12M3 6.5H12M3 9H12M3 11H12M5 3V12" stroke="#111" stroke-width="0.9"/></svg>
<svg style="position:absolute;left:1140px;top:530px;" width="12" height="12" viewBox="0 0 12 12"><path d="M1 1L11 11M11 1L1 11" stroke="#333" stroke-width="2"/></svg>
<div style="position:absolute;left:1110px;top:550px;width:253px;height:70px;background:#fff;border:1px solid #9a9a9a;"></div>
<div style="position:absolute;left:1345px;top:552px;width:16px;height:66px;background:#f0f0f0;"></div>
<svg style="position:absolute;left:1350px;top:559px;" width="8" height="5" viewBox="0 0 8 5"><path d="M0 5L4 0L8 5Z" fill="#c0c0c0"/></svg>
<svg style="position:absolute;left:1350px;top:607px;" width="8" height="5" viewBox="0 0 8 5"><path d="M0 0L4 5L8 0Z" fill="#c0c0c0"/></svg>
</body></html>
